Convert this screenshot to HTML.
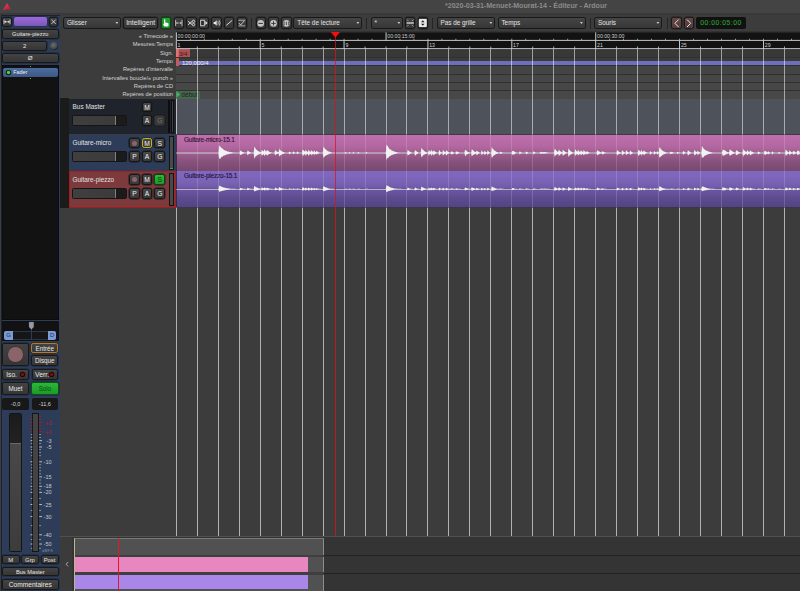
<!DOCTYPE html>
<html lang="fr"><head><meta charset="utf-8"><title>Ardour</title>
<style>
*{box-sizing:border-box;margin:0;padding:0}
html,body{width:800px;height:591px;overflow:hidden;background:#3c3c3c}
body{position:relative;font-family:"Liberation Sans","DejaVu Sans",sans-serif;color:#ddd;font-size:6.3px;line-height:1}
.a{position:absolute}
.btn{position:absolute;border-radius:2.2px;background:linear-gradient(#434343,#353535);border:0.9px solid #181818;box-shadow:0 0 0 0.5px rgba(18,18,24,0.55);color:#e8e8e8;text-align:center;white-space:nowrap;overflow:hidden}
.dd{position:absolute;border-radius:2.2px;background:linear-gradient(#454545,#363636);border:0.9px solid #181818;color:#e4e4e4;white-space:nowrap;overflow:hidden;font-size:6.4px;padding-left:2.9px}
.dd:after{content:"";position:absolute;right:1.6px;top:50%;margin-top:-0.9px;width:3px;height:2px;background:#c8c8c8;clip-path:polygon(0 0,100% 0,50% 100%)}
.sep{position:absolute;width:1.2px;background:#252525;top:17.5px;height:11px}
.rl{position:absolute;right:627px;white-space:nowrap;font-size:5.7px;color:#d4d4d4;text-align:right}
.tb{position:absolute;border-radius:2.2px;background:linear-gradient(#484848,#383838);border:0.9px solid #151515;box-shadow:0 0 0 0.45px #1c1c1c;color:#f0f0f0;text-align:center;font-size:6.7px;white-space:nowrap}
.fd{position:absolute;border-radius:1.5px;background:linear-gradient(90deg,#3f3f3f 0,#3b3b3b 80%,#808080 80%,#808080 81.5%,#1b1b1b 81.5%);border:0.7px solid #151515}
.tn{position:absolute;font-size:6.4px;color:#e2e2e2;white-space:nowrap}
svg{position:absolute;left:0;top:0}
</style></head><body>

<div class="a" style="left:0;top:0;width:800px;height:15px;background:linear-gradient(#444 0,#444 84%,#393939 90%,#393939 96%,#3d3d3d 100%)"></div>
<div class="a" style="left:445px;top:2.9px;width:170px;font-size:7.1px;font-weight:bold;color:#8b8b8b;white-space:nowrap;letter-spacing:-0.02px">*2020-03-31-Menuet-Mourat-14 - Éditeur - Ardour</div>
<svg width="16" height="14" viewBox="0 0 16 14"><defs><linearGradient id="lg" x1="0" y1="0" x2="1" y2="1"><stop offset="0" stop-color="#f04a5a"/><stop offset="1" stop-color="#b01230"/></linearGradient></defs><path d="M7 3 L11.3 10.3 L7 9.2 L2.8 10.3 Z" fill="url(#lg)"/></svg>
<div class="dd" style="left:63px;top:17.3px;width:58px;height:11.4px;line-height:9.7px;">Glisser</div>
<div class="btn" style="left:123px;top:17.3px;width:35.2px;height:11.4px;font-size:6.7px;line-height:9.8px;letter-spacing:0.02px">Intelligent</div>
<div class="btn" style="left:161px;top:17.3px;width:10.4px;height:11.4px;background:linear-gradient(#20a830,#178c24);border-color:#0b4a12"></div>
<div class="btn" style="left:173.6px;top:17.3px;width:10.4px;height:11.4px;"></div>
<div class="btn" style="left:186.2px;top:17.3px;width:10.4px;height:11.4px;"></div>
<div class="btn" style="left:198.8px;top:17.3px;width:10.4px;height:11.4px;"></div>
<div class="btn" style="left:211.4px;top:17.3px;width:10.4px;height:11.4px;"></div>
<div class="btn" style="left:224px;top:17.3px;width:10.4px;height:11.4px;"></div>
<div class="btn" style="left:236.6px;top:17.3px;width:10.4px;height:11.4px;"></div>
<div class="sep" style="left:251px"></div>
<div class="btn" style="left:255.5px;top:17.3px;width:10.4px;height:11.4px;"></div>
<div class="btn" style="left:268.3px;top:17.3px;width:10.4px;height:11.4px;"></div>
<div class="btn" style="left:281.2px;top:17.3px;width:10.4px;height:11.4px;"></div>
<div class="dd" style="left:293.4px;top:17.3px;width:68.6px;height:11.4px;line-height:9.7px;">Tête de lecture</div>
<div class="sep" style="left:365.5px"></div>
<div class="dd" style="left:370.5px;top:17.3px;width:32.5px;height:11.4px;line-height:9.7px;">*</div>
<div class="btn" style="left:405px;top:17.3px;width:10.4px;height:11.4px;"></div>
<div class="btn" style="left:417.6px;top:17.3px;width:10.4px;height:11.4px;"></div>
<div class="sep" style="left:431.5px"></div>
<div class="dd" style="left:436.5px;top:17.3px;width:58.5px;height:11.4px;line-height:9.7px;">Pas de grille</div>
<div class="dd" style="left:497.5px;top:17.3px;width:88px;height:11.4px;line-height:9.7px;">Temps</div>
<div class="sep" style="left:589.5px"></div>
<div class="dd" style="left:594px;top:17.3px;width:68px;height:11.4px;line-height:9.7px;">Souris</div>
<div class="sep" style="left:666.7px"></div>
<div class="btn" style="left:671px;top:17.3px;width:10.8px;height:11.4px;background:linear-gradient(#624848,#523c3c);border-color:#221818"></div>
<div class="btn" style="left:683.6px;top:17.3px;width:10.8px;height:11.4px;background:linear-gradient(#624848,#523c3c);border-color:#221818"></div>
<div class="a" style="left:696px;top:17.3px;width:50px;height:11.6px;background:#111;border-radius:2px;color:#2fa233;font-size:6.7px;line-height:11.6px;text-align:center;letter-spacing:0.55px;-webkit-text-stroke:0.1px">00:00:05:00</div>
<svg width="800" height="32" viewBox="0 0 800 32"><path d="M164 19.4 q0.65 -0.5 1.3 0 v3.2 l2.6 0.5 q0.7 0.2 0.7 0.9 v1.6 q0 1 -1 1 h-2.8 q-0.8 0 -1.1 -0.8 l-0.5 -1.6 q0 -0.6 0.8 -0.4 z" fill="#f4f4f4"/><path d="M175.60000000000002 19.9 v6.2 M182.0 19.9 v6.2" stroke="#e8e8e8" stroke-width="0.7" fill="none"/><path d="M175.60000000000002 23 h6.4" stroke="#d0d0d0" stroke-width="0.5" fill="none"/><path d="M176.10000000000002 23 l1.3 -1.1 v2.2 z M181.5 23 l-1.3 -1.1 v2.2 z" fill="#e8e8e8"/><path d="M188.0 21.2 l4.2 3.4 M188.0 24.8 l4.2 -3.4" stroke="#e8e8e8" stroke-width="0.9" fill="none"/><circle cx="193.5" cy="21.4" r="1.2" stroke="#e8e8e8" stroke-width="0.8" fill="none"/><circle cx="193.5" cy="24.6" r="1.2" stroke="#e8e8e8" stroke-width="0.8" fill="none"/><rect x="200.7" y="20.2" width="3.6" height="5.6" fill="#2a2a2a" stroke="#e8e8e8" stroke-width="0.8"/><path d="M205.3 21 l2.3 2 l-2.3 2 z" fill="#e8e8e8"/><path d="M213.6 22 h1.3 l1.8 -1.7 v5.4 l-1.8 -1.7 h-1.3 z" fill="#e8e8e8"/><path d="M217.7 21.2 q1.2 1.8 0 3.6 M219.1 20.2 q2 2.8 0 5.6" stroke="#e8e8e8" stroke-width="0.7" fill="none"/><path d="M226.2 25.4 L232.2 20.4" stroke="#e8e8e8" stroke-width="0.9"/><path d="M238.4 20.3 h6.8 M238.4 25.8 h6.8" stroke="#e8e8e8" stroke-width="0.6"/><path d="M238.8 23 l1.8 2 l3.6 -4" stroke="#e8e8e8" stroke-width="0.8" fill="none"/><circle cx="260.7" cy="23.4" r="3.3" fill="#c4c4c4"/><path d="M258.5 23.4 h4.4" stroke="#333" stroke-width="1"/><circle cx="273.5" cy="23.4" r="3.3" fill="#c4c4c4"/><path d="M271.3 23.4 h4.4 M273.5 21.2 v4.4" stroke="#333" stroke-width="0.9"/><circle cx="286.4" cy="23.4" r="3.3" fill="#c4c4c4"/><path d="M284.59999999999997 21.9 h-0.6 v3 h0.6 M288.2 21.9 h0.6 v3 h-0.6 M286.4 21.799999999999997 v3.2" stroke="#333" stroke-width="0.8" fill="none"/><path d="M406.59999999999997 23 h7.2" stroke="#e0e0e0" stroke-width="1.3"/><path d="M407.0 19.6 l1.5 1.5 M413.4 19.6 l-1.5 1.5 M407.0 26.4 l1.5 -1.5 M413.4 26.4 l-1.5 -1.5" stroke="#e0e0e0" stroke-width="0.6"/><rect x="418.8" y="19" width="8" height="8" rx="0.8" fill="#e8e8e8"/><path d="M421.1 22.3 l1.7 -2 l1.7 2 z M421.1 23.8 l1.7 2 l1.7 -2 z" fill="#1c1c1c"/><path d="M678.6 19.6 l-3.7 3.7 l3.7 3.7" stroke="#e2e2e2" stroke-width="1" fill="none"/><path d="M687 19.6 l3.7 3.7 l-3.7 3.7" stroke="#e2e2e2" stroke-width="1" fill="none"/></svg>
<div class="a" style="left:176.3px;top:31.3px;width:623.7px;height:1.4px;background:linear-gradient(#3a3a3a,#1c1c1c)"></div>
<div class="rl" style="top:34.3px">« Timecode »</div>
<div class="rl" style="top:42.4px">Mesures:Temps</div>
<div class="rl" style="top:50.8px">Sign.</div>
<div class="rl" style="top:59.1px">Tempo</div>
<div class="rl" style="top:67.4px">Repères d'intervalle</div>
<div class="rl" style="top:75.7px">Intervalles boucle/« punch »</div>
<div class="rl" style="top:84.1px">Repères de CD</div>
<div class="rl" style="top:92.4px">Repères de position</div>
<div class="a" style="left:176.3px;top:32.6px;width:623.7px;height:16.1px;background:#121212"></div>
<div class="a" style="left:176.3px;top:48.7px;width:623.7px;height:8.4px;background:#383838;border-top:0.7px solid #303030"></div>
<div class="a" style="left:176.3px;top:57.0px;width:623.7px;height:8.4px;background:#3b3b3b;border-top:0.7px solid #303030"></div>
<div class="a" style="left:176.3px;top:65.3px;width:623.7px;height:8.4px;background:#444444;border-top:0.7px solid #303030"></div>
<div class="a" style="left:176.3px;top:73.6px;width:623.7px;height:8.5px;background:#464646;border-top:0.7px solid #303030"></div>
<div class="a" style="left:176.3px;top:82.0px;width:623.7px;height:8.4px;background:#474747;border-top:0.7px solid #303030"></div>
<div class="a" style="left:176.3px;top:90.3px;width:623.7px;height:8.4px;background:#484848;border-top:0.7px solid #303030"></div>
<div class="a" style="left:176.3px;top:60.7px;width:623.7px;height:4.1px;background:#6d6fbc"></div>
<div class="a" style="left:176.3px;top:49.4px;width:14px;height:7.6px;background:linear-gradient(90deg,#e67272 0,#e67272 17%,#ab5151 19%);color:#4e1616;font-size:6.2px;line-height:10.2px;padding-left:2.6px;overflow:hidden">3/4</div>
<div class="a" style="left:176.3px;top:57.6px;width:3.2px;height:8px;background:#c85a5a"></div>
<div class="a" style="left:181.9px;top:59.8px;font-size:6px;color:#eeeef8;white-space:nowrap">120,000/4</div>
<div class="a" style="left:176.3px;top:91px;width:23.5px;height:7.6px;background:#48664f"></div>
<div class="a" style="left:181.3px;top:92.2px;font-size:6.6px;color:#16261a;white-space:nowrap">début</div>
<svg width="800" height="100" viewBox="0 0 800 100"><path d="M176.3 91 L180 94.4 L176.3 97.8 z" fill="#45b06c"/></svg>
<div class="a" style="left:176.3px;top:98.6px;width:623.7px;height:35.900000000000006px;background:#4d525b"></div>
<div class="a" style="left:176.3px;top:134.5px;width:623.7px;height:36.5px;background:linear-gradient(#be6eac 0,#b468a2 30%,#86527c 75%,#774870 100%)"></div>
<div class="a" style="left:176.3px;top:171.0px;width:623.7px;height:36.0px;background:linear-gradient(#8068c0 0,#7a63b6 30%,#5d4b90 75%,#54447f 100%)"></div>
<div class="a" style="left:176.3px;top:206.9px;width:623.7px;height:1px;background:#3a3550"></div>
<div class="a" style="left:184px;top:136.9px;font-size:6.5px;letter-spacing:-0.2px;color:#2c1029;-webkit-text-stroke:0.1px;white-space:nowrap">Guitare-micro-15.1</div>
<div class="a" style="left:184px;top:173.3px;font-size:6.5px;letter-spacing:-0.2px;color:#1a1238;-webkit-text-stroke:0.1px;white-space:nowrap">Guitare-piezzo-15.1</div>
<svg width="800" height="591" viewBox="0 0 800 591"><rect x="176" y="98.6" width="1" height="35.9" fill="#fff" fill-opacity="0.62"/><rect x="176" y="134.5" width="1" height="72.6" fill="#fff" fill-opacity="0.15"/><rect x="176" y="207.6" width="1" height="328.8" fill="#fff" fill-opacity="0.6"/><rect x="197" y="48.8" width="1" height="85.7" fill="#fff" fill-opacity="0.52"/><rect x="197" y="134.5" width="1" height="72.6" fill="#fff" fill-opacity="0.15"/><rect x="197" y="207.6" width="1" height="328.8" fill="#fff" fill-opacity="0.6"/><rect x="218" y="48.8" width="1" height="85.7" fill="#fff" fill-opacity="0.52"/><rect x="218" y="134.5" width="1" height="72.6" fill="#fff" fill-opacity="0.15"/><rect x="218" y="207.6" width="1" height="328.8" fill="#fff" fill-opacity="0.6"/><rect x="239" y="48.8" width="1" height="85.7" fill="#fff" fill-opacity="0.52"/><rect x="239" y="134.5" width="1" height="72.6" fill="#fff" fill-opacity="0.15"/><rect x="239" y="207.6" width="1" height="328.8" fill="#fff" fill-opacity="0.6"/><rect x="260" y="48.8" width="1" height="85.7" fill="#fff" fill-opacity="0.52"/><rect x="260" y="134.5" width="1" height="72.6" fill="#fff" fill-opacity="0.15"/><rect x="260" y="207.6" width="1" height="328.8" fill="#fff" fill-opacity="0.6"/><rect x="281" y="48.8" width="1" height="85.7" fill="#fff" fill-opacity="0.52"/><rect x="281" y="134.5" width="1" height="72.6" fill="#fff" fill-opacity="0.15"/><rect x="281" y="207.6" width="1" height="328.8" fill="#fff" fill-opacity="0.6"/><rect x="302" y="48.8" width="1" height="85.7" fill="#fff" fill-opacity="0.52"/><rect x="302" y="134.5" width="1" height="72.6" fill="#fff" fill-opacity="0.15"/><rect x="302" y="207.6" width="1" height="328.8" fill="#fff" fill-opacity="0.6"/><rect x="323" y="48.8" width="1" height="85.7" fill="#fff" fill-opacity="0.52"/><rect x="323" y="134.5" width="1" height="72.6" fill="#fff" fill-opacity="0.15"/><rect x="323" y="207.6" width="1" height="328.8" fill="#fff" fill-opacity="0.6"/><rect x="344" y="48.8" width="1" height="85.7" fill="#fff" fill-opacity="0.52"/><rect x="344" y="134.5" width="1" height="72.6" fill="#fff" fill-opacity="0.15"/><rect x="344" y="207.6" width="1" height="328.8" fill="#fff" fill-opacity="0.6"/><rect x="365" y="48.8" width="1" height="85.7" fill="#fff" fill-opacity="0.52"/><rect x="365" y="134.5" width="1" height="72.6" fill="#fff" fill-opacity="0.15"/><rect x="365" y="207.6" width="1" height="328.8" fill="#fff" fill-opacity="0.6"/><rect x="386" y="48.8" width="1" height="85.7" fill="#fff" fill-opacity="0.52"/><rect x="386" y="134.5" width="1" height="72.6" fill="#fff" fill-opacity="0.15"/><rect x="386" y="207.6" width="1" height="328.8" fill="#fff" fill-opacity="0.6"/><rect x="406" y="48.8" width="1" height="85.7" fill="#fff" fill-opacity="0.52"/><rect x="406" y="134.5" width="1" height="72.6" fill="#fff" fill-opacity="0.15"/><rect x="406" y="207.6" width="1" height="328.8" fill="#fff" fill-opacity="0.6"/><rect x="427" y="48.8" width="1" height="85.7" fill="#fff" fill-opacity="0.52"/><rect x="427" y="134.5" width="1" height="72.6" fill="#fff" fill-opacity="0.15"/><rect x="427" y="207.6" width="1" height="328.8" fill="#fff" fill-opacity="0.6"/><rect x="448" y="48.8" width="1" height="85.7" fill="#fff" fill-opacity="0.52"/><rect x="448" y="134.5" width="1" height="72.6" fill="#fff" fill-opacity="0.15"/><rect x="448" y="207.6" width="1" height="328.8" fill="#fff" fill-opacity="0.6"/><rect x="469" y="48.8" width="1" height="85.7" fill="#fff" fill-opacity="0.52"/><rect x="469" y="134.5" width="1" height="72.6" fill="#fff" fill-opacity="0.15"/><rect x="469" y="207.6" width="1" height="328.8" fill="#fff" fill-opacity="0.6"/><rect x="490" y="48.8" width="1" height="85.7" fill="#fff" fill-opacity="0.52"/><rect x="490" y="134.5" width="1" height="72.6" fill="#fff" fill-opacity="0.15"/><rect x="490" y="207.6" width="1" height="328.8" fill="#fff" fill-opacity="0.6"/><rect x="511" y="48.8" width="1" height="85.7" fill="#fff" fill-opacity="0.52"/><rect x="511" y="134.5" width="1" height="72.6" fill="#fff" fill-opacity="0.15"/><rect x="511" y="207.6" width="1" height="328.8" fill="#fff" fill-opacity="0.6"/><rect x="532" y="48.8" width="1" height="85.7" fill="#fff" fill-opacity="0.52"/><rect x="532" y="134.5" width="1" height="72.6" fill="#fff" fill-opacity="0.15"/><rect x="532" y="207.6" width="1" height="328.8" fill="#fff" fill-opacity="0.6"/><rect x="553" y="48.8" width="1" height="85.7" fill="#fff" fill-opacity="0.52"/><rect x="553" y="134.5" width="1" height="72.6" fill="#fff" fill-opacity="0.15"/><rect x="553" y="207.6" width="1" height="328.8" fill="#fff" fill-opacity="0.6"/><rect x="574" y="48.8" width="1" height="85.7" fill="#fff" fill-opacity="0.52"/><rect x="574" y="134.5" width="1" height="72.6" fill="#fff" fill-opacity="0.15"/><rect x="574" y="207.6" width="1" height="328.8" fill="#fff" fill-opacity="0.6"/><rect x="595" y="48.8" width="1" height="85.7" fill="#fff" fill-opacity="0.52"/><rect x="595" y="134.5" width="1" height="72.6" fill="#fff" fill-opacity="0.15"/><rect x="595" y="207.6" width="1" height="328.8" fill="#fff" fill-opacity="0.6"/><rect x="616" y="48.8" width="1" height="85.7" fill="#fff" fill-opacity="0.52"/><rect x="616" y="134.5" width="1" height="72.6" fill="#fff" fill-opacity="0.15"/><rect x="616" y="207.6" width="1" height="328.8" fill="#fff" fill-opacity="0.6"/><rect x="637" y="48.8" width="1" height="85.7" fill="#fff" fill-opacity="0.52"/><rect x="637" y="134.5" width="1" height="72.6" fill="#fff" fill-opacity="0.15"/><rect x="637" y="207.6" width="1" height="328.8" fill="#fff" fill-opacity="0.6"/><rect x="658" y="48.8" width="1" height="85.7" fill="#fff" fill-opacity="0.52"/><rect x="658" y="134.5" width="1" height="72.6" fill="#fff" fill-opacity="0.15"/><rect x="658" y="207.6" width="1" height="328.8" fill="#fff" fill-opacity="0.6"/><rect x="679" y="48.8" width="1" height="85.7" fill="#fff" fill-opacity="0.52"/><rect x="679" y="134.5" width="1" height="72.6" fill="#fff" fill-opacity="0.15"/><rect x="679" y="207.6" width="1" height="328.8" fill="#fff" fill-opacity="0.6"/><rect x="700" y="48.8" width="1" height="85.7" fill="#fff" fill-opacity="0.52"/><rect x="700" y="134.5" width="1" height="72.6" fill="#fff" fill-opacity="0.15"/><rect x="700" y="207.6" width="1" height="328.8" fill="#fff" fill-opacity="0.6"/><rect x="721" y="48.8" width="1" height="85.7" fill="#fff" fill-opacity="0.52"/><rect x="721" y="134.5" width="1" height="72.6" fill="#fff" fill-opacity="0.15"/><rect x="721" y="207.6" width="1" height="328.8" fill="#fff" fill-opacity="0.6"/><rect x="742" y="48.8" width="1" height="85.7" fill="#fff" fill-opacity="0.52"/><rect x="742" y="134.5" width="1" height="72.6" fill="#fff" fill-opacity="0.15"/><rect x="742" y="207.6" width="1" height="328.8" fill="#fff" fill-opacity="0.6"/><rect x="763" y="48.8" width="1" height="85.7" fill="#fff" fill-opacity="0.52"/><rect x="763" y="134.5" width="1" height="72.6" fill="#fff" fill-opacity="0.15"/><rect x="763" y="207.6" width="1" height="328.8" fill="#fff" fill-opacity="0.6"/><rect x="784" y="48.8" width="1" height="85.7" fill="#fff" fill-opacity="0.52"/><rect x="784" y="134.5" width="1" height="72.6" fill="#fff" fill-opacity="0.15"/><rect x="784" y="207.6" width="1" height="328.8" fill="#fff" fill-opacity="0.6"/><rect x="176.3" y="39.9" width="623.7" height="0.9" fill="#d8d8d8"/><rect x="176.3" y="48.2" width="623.7" height="0.9" fill="#d8d8d8"/><rect x="175.90" y="32.4" width="0.9" height="8" fill="#ddd"/><rect x="189.93" y="38.7" width="0.7" height="1.6" fill="#ccc"/><rect x="203.91" y="38.7" width="0.7" height="1.6" fill="#ccc"/><rect x="217.89" y="38.7" width="0.7" height="1.6" fill="#ccc"/><rect x="231.87" y="38.7" width="0.7" height="1.6" fill="#ccc"/><rect x="245.85" y="38.7" width="0.7" height="1.6" fill="#ccc"/><rect x="259.83" y="38.7" width="0.7" height="1.6" fill="#ccc"/><rect x="273.81" y="38.7" width="0.7" height="1.6" fill="#ccc"/><rect x="287.79" y="38.7" width="0.7" height="1.6" fill="#ccc"/><rect x="301.77" y="38.7" width="0.7" height="1.6" fill="#ccc"/><rect x="315.75" y="38.7" width="0.7" height="1.6" fill="#ccc"/><rect x="329.73" y="38.7" width="0.7" height="1.6" fill="#ccc"/><rect x="343.71" y="38.7" width="0.7" height="1.6" fill="#ccc"/><rect x="357.69" y="38.7" width="0.7" height="1.6" fill="#ccc"/><rect x="371.67" y="38.7" width="0.7" height="1.6" fill="#ccc"/><rect x="385.60" y="32.4" width="0.9" height="8" fill="#ddd"/><rect x="399.63" y="38.7" width="0.7" height="1.6" fill="#ccc"/><rect x="413.61" y="38.7" width="0.7" height="1.6" fill="#ccc"/><rect x="427.59" y="38.7" width="0.7" height="1.6" fill="#ccc"/><rect x="441.57" y="38.7" width="0.7" height="1.6" fill="#ccc"/><rect x="455.55" y="38.7" width="0.7" height="1.6" fill="#ccc"/><rect x="469.53" y="38.7" width="0.7" height="1.6" fill="#ccc"/><rect x="483.51" y="38.7" width="0.7" height="1.6" fill="#ccc"/><rect x="497.49" y="38.7" width="0.7" height="1.6" fill="#ccc"/><rect x="511.47" y="38.7" width="0.7" height="1.6" fill="#ccc"/><rect x="525.45" y="38.7" width="0.7" height="1.6" fill="#ccc"/><rect x="539.43" y="38.7" width="0.7" height="1.6" fill="#ccc"/><rect x="553.41" y="38.7" width="0.7" height="1.6" fill="#ccc"/><rect x="567.39" y="38.7" width="0.7" height="1.6" fill="#ccc"/><rect x="581.37" y="38.7" width="0.7" height="1.6" fill="#ccc"/><rect x="595.30" y="32.4" width="0.9" height="8" fill="#ddd"/><rect x="609.33" y="38.7" width="0.7" height="1.6" fill="#ccc"/><rect x="623.31" y="38.7" width="0.7" height="1.6" fill="#ccc"/><rect x="637.29" y="38.7" width="0.7" height="1.6" fill="#ccc"/><rect x="651.27" y="38.7" width="0.7" height="1.6" fill="#ccc"/><rect x="665.25" y="38.7" width="0.7" height="1.6" fill="#ccc"/><rect x="679.23" y="38.7" width="0.7" height="1.6" fill="#ccc"/><rect x="693.21" y="38.7" width="0.7" height="1.6" fill="#ccc"/><rect x="707.19" y="38.7" width="0.7" height="1.6" fill="#ccc"/><rect x="721.17" y="38.7" width="0.7" height="1.6" fill="#ccc"/><rect x="735.15" y="38.7" width="0.7" height="1.6" fill="#ccc"/><rect x="749.13" y="38.7" width="0.7" height="1.6" fill="#ccc"/><rect x="763.11" y="38.7" width="0.7" height="1.6" fill="#ccc"/><rect x="777.09" y="38.7" width="0.7" height="1.6" fill="#ccc"/><rect x="791.07" y="38.7" width="0.7" height="1.6" fill="#ccc"/><rect x="175.85" y="40.8" width="0.9" height="8" fill="#ddd"/><rect x="196.87" y="46.5" width="0.8" height="2" fill="#ccc"/><rect x="217.84" y="46.5" width="0.8" height="2" fill="#ccc"/><rect x="238.81" y="46.5" width="0.8" height="2" fill="#ccc"/><rect x="259.73" y="40.8" width="0.9" height="8" fill="#ddd"/><rect x="280.75" y="46.5" width="0.8" height="2" fill="#ccc"/><rect x="301.72" y="46.5" width="0.8" height="2" fill="#ccc"/><rect x="322.69" y="46.5" width="0.8" height="2" fill="#ccc"/><rect x="343.61" y="40.8" width="0.9" height="8" fill="#ddd"/><rect x="364.63" y="46.5" width="0.8" height="2" fill="#ccc"/><rect x="385.60" y="46.5" width="0.8" height="2" fill="#ccc"/><rect x="406.57" y="46.5" width="0.8" height="2" fill="#ccc"/><rect x="427.49" y="40.8" width="0.9" height="8" fill="#ddd"/><rect x="448.51" y="46.5" width="0.8" height="2" fill="#ccc"/><rect x="469.48" y="46.5" width="0.8" height="2" fill="#ccc"/><rect x="490.45" y="46.5" width="0.8" height="2" fill="#ccc"/><rect x="511.37" y="40.8" width="0.9" height="8" fill="#ddd"/><rect x="532.39" y="46.5" width="0.8" height="2" fill="#ccc"/><rect x="553.36" y="46.5" width="0.8" height="2" fill="#ccc"/><rect x="574.33" y="46.5" width="0.8" height="2" fill="#ccc"/><rect x="595.25" y="40.8" width="0.9" height="8" fill="#ddd"/><rect x="616.27" y="46.5" width="0.8" height="2" fill="#ccc"/><rect x="637.24" y="46.5" width="0.8" height="2" fill="#ccc"/><rect x="658.21" y="46.5" width="0.8" height="2" fill="#ccc"/><rect x="679.13" y="40.8" width="0.9" height="8" fill="#ddd"/><rect x="700.15" y="46.5" width="0.8" height="2" fill="#ccc"/><rect x="721.12" y="46.5" width="0.8" height="2" fill="#ccc"/><rect x="742.09" y="46.5" width="0.8" height="2" fill="#ccc"/><rect x="763.01" y="40.8" width="0.9" height="8" fill="#ddd"/><rect x="784.03" y="46.5" width="0.8" height="2" fill="#ccc"/><text x="177.6" y="38.2" font-size="5.2" fill="#d0d0d0" font-family="Liberation Sans, sans-serif">00:00:00:00</text><text x="387.3" y="38.2" font-size="5.2" fill="#d0d0d0" font-family="Liberation Sans, sans-serif">00:00:15:00</text><text x="597.0" y="38.2" font-size="5.2" fill="#d0d0d0" font-family="Liberation Sans, sans-serif">00:00:30:00</text><text x="177.6" y="46.9" font-size="5.2" fill="#d0d0d0" font-family="Liberation Sans, sans-serif">1</text><text x="261.5" y="46.9" font-size="5.2" fill="#d0d0d0" font-family="Liberation Sans, sans-serif">5</text><text x="345.4" y="46.9" font-size="5.2" fill="#d0d0d0" font-family="Liberation Sans, sans-serif">9</text><text x="429.2" y="46.9" font-size="5.2" fill="#d0d0d0" font-family="Liberation Sans, sans-serif">13</text><text x="513.1" y="46.9" font-size="5.2" fill="#d0d0d0" font-family="Liberation Sans, sans-serif">17</text><text x="597.0" y="46.9" font-size="5.2" fill="#d0d0d0" font-family="Liberation Sans, sans-serif">21</text><text x="680.9" y="46.9" font-size="5.2" fill="#d0d0d0" font-family="Liberation Sans, sans-serif">25</text><text x="764.8" y="46.9" font-size="5.2" fill="#d0d0d0" font-family="Liberation Sans, sans-serif">29</text><rect x="176.1" y="134.5" width="0.9" height="72.6" fill="#241a30" fill-opacity="0.85"/><polygon points="176.3,152.58 176.7,152.58 177.1,152.58 177.5,152.58 177.9,152.58 178.3,152.58 178.7,152.58 179.1,152.58 179.5,152.58 179.9,152.58 180.3,152.58 180.7,152.58 181.1,152.58 181.5,152.58 181.9,152.58 182.3,152.58 182.7,152.58 183.1,152.58 183.5,152.58 183.9,152.58 184.3,152.58 184.7,152.58 185.1,152.58 185.5,152.58 185.9,152.58 186.3,152.58 186.7,152.58 187.1,152.58 187.5,152.58 187.9,152.58 188.3,152.58 188.7,152.58 189.1,152.58 189.5,152.58 189.9,152.58 190.3,152.58 190.7,152.58 191.1,152.58 191.5,152.58 191.9,152.58 192.3,152.58 192.7,152.58 193.1,152.58 193.5,152.58 193.9,152.58 194.3,152.58 194.7,152.58 195.1,152.58 195.5,152.58 195.9,152.58 196.3,152.58 196.7,152.58 197.1,152.58 197.5,152.58 197.9,152.58 198.3,152.58 198.7,152.58 199.1,152.58 199.5,152.58 199.9,152.58 200.3,152.58 200.7,152.58 201.1,152.58 201.5,152.58 201.9,152.58 202.3,152.58 202.7,152.58 203.1,152.58 203.5,152.58 203.9,152.58 204.3,152.58 204.7,152.58 205.1,152.58 205.5,152.58 205.9,152.58 206.3,152.58 206.7,152.58 207.1,152.58 207.5,152.58 207.9,152.58 208.3,152.58 208.7,152.58 209.1,152.58 209.5,152.58 209.9,152.58 210.3,152.58 210.7,152.58 211.1,152.58 211.5,152.58 211.9,152.58 212.3,152.58 212.7,152.58 213.1,152.58 213.5,152.58 213.9,152.58 214.3,152.58 214.7,152.58 215.1,152.58 215.5,152.58 215.9,152.58 216.3,152.58 216.7,152.58 217.1,152.58 217.5,152.58 217.9,152.58 218.3,152.58 218.7,149.68 219.1,144.23 219.5,146.23 219.9,145.05 220.3,146.87 220.7,146.02 221.1,147.42 221.5,148.10 221.9,147.41 222.3,148.31 222.7,148.74 223.1,148.66 223.5,149.49 223.9,149.75 224.3,149.96 224.7,150.27 225.1,150.31 225.5,150.36 225.9,150.64 226.3,150.76 226.7,150.91 227.1,151.10 227.5,151.42 227.9,151.47 228.3,151.36 228.7,151.62 229.1,151.64 229.5,151.88 229.9,151.91 230.3,151.85 230.7,151.99 231.1,151.98 231.5,152.11 231.9,152.20 232.3,152.26 232.7,152.31 233.1,152.32 233.5,152.34 233.9,152.44 234.3,152.42 234.7,152.46 235.1,152.50 235.5,152.53 235.9,152.57 236.3,152.58 236.7,152.58 237.1,152.58 237.5,152.58 237.9,152.58 238.3,152.58 238.7,152.58 239.1,152.58 239.5,152.58 239.9,150.39 240.3,150.15 240.7,150.87 241.1,150.83 241.5,151.37 241.9,151.30 242.3,151.75 242.7,151.93 243.1,152.01 243.5,152.11 243.9,152.15 244.3,152.37 244.7,152.39 245.1,152.42 245.5,152.49 245.9,152.56 246.3,152.58 246.7,152.58 247.1,151.94 247.5,150.14 247.9,150.51 248.3,151.01 248.7,151.18 249.1,151.60 249.5,151.82 249.9,151.91 250.3,151.96 250.7,152.16 251.1,152.31 251.5,152.42 251.9,152.41 252.3,152.49 252.7,152.56 253.1,152.58 253.5,152.58 253.9,150.19 254.3,145.68 254.7,147.02 255.1,147.19 255.5,148.20 255.9,149.12 256.3,149.53 256.7,149.76 257.1,150.25 257.5,150.03 257.9,150.72 258.3,150.96 258.7,151.26 259.1,151.41 259.5,151.32 259.9,151.75 260.3,151.87 260.7,152.08 261.1,152.07 261.5,150.68 261.9,149.56 262.3,150.10 262.7,150.58 263.1,150.82 263.5,151.02 263.9,151.27 264.3,148.83 264.7,149.61 265.1,149.98 265.5,150.65 265.9,151.37 266.3,151.34 266.7,150.02 267.1,150.08 267.5,150.24 267.9,150.42 268.3,150.87 268.7,151.10 269.1,151.53 269.5,151.75 269.9,151.92 270.3,151.95 270.7,152.07 271.1,152.22 271.5,152.27 271.9,152.41 272.3,152.42 272.7,152.50 273.1,152.56 273.5,152.58 273.9,152.58 274.3,152.58 274.7,151.60 275.1,149.36 275.5,150.05 275.9,150.81 276.3,150.86 276.7,151.27 277.1,151.72 277.5,151.74 277.9,151.94 278.3,152.14 278.7,151.17 279.1,148.09 279.5,148.62 279.9,149.96 280.3,149.72 280.7,150.36 281.1,150.82 281.5,151.08 281.9,151.34 282.3,151.22 282.7,151.48 283.1,151.64 283.5,151.98 283.9,152.04 284.3,152.26 284.7,152.27 285.1,152.41 285.5,152.45 285.9,152.43 286.3,152.50 286.7,152.56 287.1,152.58 287.5,152.58 287.9,152.58 288.3,152.58 288.7,152.28 289.1,151.38 289.5,151.61 289.9,151.88 290.3,152.02 290.7,152.23 291.1,152.29 291.5,152.41 291.9,152.52 292.3,152.58 292.7,152.20 293.1,151.09 293.5,151.61 293.9,151.68 294.3,152.03 294.7,152.25 295.1,152.28 295.5,152.41 295.9,152.52 296.3,152.58 296.7,152.34 297.1,151.30 297.5,151.48 297.9,151.89 298.3,152.15 298.7,152.28 299.1,152.43 299.5,152.44 299.9,152.55 300.3,152.58 300.7,152.58 301.1,152.58 301.5,152.58 301.9,152.58 302.3,149.36 302.7,149.42 303.1,149.89 303.5,149.96 303.9,150.44 304.3,151.22 304.7,151.11 305.1,151.49 305.5,149.57 305.9,149.65 306.3,150.32 306.7,151.21 307.1,151.36 307.5,151.51 307.9,151.85 308.3,149.30 308.7,150.08 309.1,150.62 309.5,150.82 309.9,151.43 310.3,151.52 310.7,151.80 311.1,149.77 311.5,150.27 311.9,150.80 312.3,151.32 312.7,151.37 313.1,151.68 313.5,151.89 313.9,149.78 314.3,150.59 314.7,151.07 315.1,151.44 315.5,151.63 315.9,151.99 316.3,150.73 316.7,150.83 317.1,151.15 317.5,151.52 317.9,151.58 318.3,151.83 318.7,152.13 319.1,152.24 319.5,152.32 319.9,152.45 320.3,152.43 320.7,152.51 321.1,152.58 321.5,152.58 321.9,152.58 322.3,152.58 322.7,152.58 323.1,148.21 323.5,146.74 323.9,146.51 324.3,147.29 324.7,148.24 325.1,148.96 325.5,149.27 325.9,149.07 326.3,149.47 326.7,150.26 327.1,150.26 327.5,150.98 327.9,151.02 328.3,151.31 328.7,151.20 329.1,151.57 329.5,151.60 329.9,151.96 330.3,151.84 330.7,152.00 331.1,152.19 331.5,152.16 331.9,152.36 332.3,152.42 332.7,152.52 333.1,152.45 333.5,152.51 333.9,152.56 334.3,152.58 334.7,152.58 335.1,152.58 335.5,152.58 335.9,152.58 336.3,152.58 336.7,152.58 337.1,152.58 337.5,152.58 337.9,152.58 338.3,152.58 338.7,152.58 339.1,152.58 339.5,152.58 339.9,152.58 340.3,152.58 340.7,152.58 341.1,152.58 341.5,152.58 341.9,152.58 342.3,152.58 342.7,152.58 343.1,152.58 343.5,152.58 343.9,152.58 344.3,152.58 344.7,152.44 345.1,151.82 345.5,151.94 345.9,152.16 346.3,152.28 346.7,152.42 347.1,152.52 347.5,152.58 347.9,152.58 348.3,152.58 348.7,152.49 349.1,151.80 349.5,152.09 349.9,152.21 350.3,152.40 350.7,152.47 351.1,152.57 351.5,152.58 351.9,152.58 352.3,152.58 352.7,152.44 353.1,151.85 353.5,151.87 353.9,152.30 354.3,152.38 354.7,152.42 355.1,152.52 355.5,152.58 355.9,152.58 356.3,152.58 356.7,152.58 357.1,152.58 357.5,152.58 357.9,151.95 358.3,152.01 358.7,152.15 359.1,152.31 359.5,152.43 359.9,152.47 360.3,152.57 360.7,152.58 361.1,152.58 361.5,152.58 361.9,152.58 362.3,152.58 362.7,152.58 363.1,152.58 363.5,152.58 363.9,152.58 364.3,152.58 364.7,152.58 365.1,152.58 365.5,152.58 365.9,152.03 366.3,151.78 366.7,152.19 367.1,152.29 367.5,152.48 367.9,152.47 368.3,152.57 368.7,152.58 369.1,152.58 369.5,152.58 369.9,152.58 370.3,152.58 370.7,152.58 371.1,152.58 371.5,152.58 371.9,152.58 372.3,152.58 372.7,152.58 373.1,152.58 373.5,152.58 373.9,152.58 374.3,152.58 374.7,152.58 375.1,152.58 375.5,152.58 375.9,152.58 376.3,152.58 376.7,152.58 377.1,152.58 377.5,152.58 377.9,152.58 378.3,152.58 378.7,152.58 379.1,152.58 379.5,152.58 379.9,152.58 380.3,152.58 380.7,152.58 381.1,152.58 381.5,152.58 381.9,152.58 382.3,152.58 382.7,152.58 383.1,152.58 383.5,152.58 383.9,152.58 384.3,152.58 384.7,152.58 385.1,152.58 385.5,152.58 385.9,151.03 386.3,142.72 386.7,145.21 387.1,145.38 387.5,145.48 387.9,145.97 388.3,146.81 388.7,147.39 389.1,148.19 389.5,148.90 389.9,148.63 390.3,149.09 390.7,149.74 391.1,149.59 391.5,150.35 391.9,150.50 392.3,150.63 392.7,150.61 393.1,150.79 393.5,151.21 393.9,151.31 394.3,151.51 394.7,151.34 395.1,151.64 395.5,151.87 395.9,151.80 396.3,151.88 396.7,151.90 397.1,152.14 397.5,152.26 397.9,152.25 398.3,152.37 398.7,152.43 399.1,152.34 399.5,152.49 399.9,152.44 400.3,152.48 400.7,152.52 401.1,152.56 401.5,152.58 401.9,152.58 402.3,152.58 402.7,152.58 403.1,152.58 403.5,152.58 403.9,152.58 404.3,152.58 404.7,152.58 405.1,152.58 405.5,152.58 405.9,152.58 406.3,152.58 406.7,152.58 407.1,152.42 407.5,149.72 407.9,149.92 408.3,150.03 408.7,150.74 409.1,150.90 409.5,151.22 409.9,151.57 410.3,151.72 410.7,151.99 411.1,152.12 411.5,152.32 411.9,152.45 412.3,152.42 412.7,152.51 413.1,152.58 413.5,152.58 413.9,152.58 414.3,152.58 414.7,150.79 415.1,150.15 415.5,150.02 415.9,150.77 416.3,150.72 416.7,151.46 417.1,151.73 417.5,151.74 417.9,152.01 418.3,152.18 418.7,152.41 419.1,152.43 419.5,152.50 419.9,152.58 420.3,152.58 420.7,152.58 421.1,148.97 421.5,146.85 421.9,148.68 422.3,148.82 422.7,149.45 423.1,149.76 423.5,149.96 423.9,150.38 424.3,151.15 424.7,151.05 425.1,151.60 425.5,151.62 425.9,151.89 426.3,151.99 426.7,152.14 427.1,152.25 427.5,152.28 427.9,152.46 428.3,151.74 428.7,149.41 429.1,149.91 429.5,150.83 429.9,151.02 430.3,151.38 430.7,151.61 431.1,149.01 431.5,149.91 431.9,150.80 432.3,151.06 432.7,151.34 433.1,151.77 433.5,149.97 433.9,149.97 434.3,150.93 434.7,151.02 435.1,151.61 435.5,151.62 435.9,152.04 436.3,152.10 436.7,152.35 437.1,152.45 437.5,152.46 437.9,152.55 438.3,152.58 438.7,151.73 439.1,149.92 439.5,149.65 439.9,150.73 440.3,151.40 440.7,151.75 441.1,151.92 441.5,152.13 441.9,152.25 442.3,152.41 442.7,150.43 443.1,149.87 443.5,150.36 443.9,151.04 444.3,151.48 444.7,151.69 445.1,151.94 445.5,152.13 445.9,150.08 446.3,149.94 446.7,150.73 447.1,150.78 447.5,151.23 447.9,151.61 448.3,151.80 448.7,152.00 449.1,152.27 449.5,152.30 449.9,152.46 450.3,152.50 450.7,152.31 451.1,150.93 451.5,151.42 451.9,151.34 452.3,151.56 452.7,151.67 453.1,151.97 453.5,152.16 453.9,152.24 454.3,152.40 454.7,152.45 455.1,152.45 455.5,152.53 455.9,151.51 456.3,151.26 456.7,151.42 457.1,151.28 457.5,151.76 457.9,151.89 458.3,152.11 458.7,152.10 459.1,152.29 459.5,152.43 459.9,152.41 460.3,152.49 460.7,152.56 461.1,152.58 461.5,152.58 461.9,152.58 462.3,152.58 462.7,152.58 463.1,152.58 463.5,152.58 463.9,152.58 464.3,152.58 464.7,151.31 465.1,148.64 465.5,149.92 465.9,149.83 466.3,150.75 466.7,150.82 467.1,151.41 467.5,151.39 467.9,151.80 468.3,151.93 468.7,152.06 469.1,152.08 469.5,152.34 469.9,152.37 470.3,152.40 470.7,152.49 471.1,152.56 471.5,149.72 471.9,149.17 472.3,149.31 472.7,149.89 473.1,150.15 473.5,150.57 473.9,150.91 474.3,151.18 474.7,151.65 475.1,151.69 475.5,151.82 475.9,152.06 476.3,150.93 476.7,150.00 477.1,150.95 477.5,151.00 477.9,151.49 478.3,151.70 478.7,151.82 479.1,152.07 479.5,152.30 479.9,152.42 480.3,152.44 480.7,152.54 481.1,152.42 481.5,149.78 481.9,150.16 482.3,151.21 482.7,151.62 483.1,151.89 483.5,152.21 483.9,152.39 484.3,151.15 484.7,150.52 485.1,150.78 485.5,151.60 485.9,151.93 486.3,151.96 486.7,152.24 487.1,152.34 487.5,149.93 487.9,150.25 488.3,151.13 488.7,151.56 489.1,151.86 489.5,152.24 489.9,152.32 490.3,152.44 490.7,152.57 491.1,152.58 491.5,147.84 491.9,147.11 492.3,147.39 492.7,148.76 493.1,149.28 493.5,149.03 493.9,149.42 494.3,150.49 494.7,150.43 495.1,150.53 495.5,151.10 495.9,151.23 496.3,151.63 496.7,151.84 497.1,151.95 497.5,152.08 497.9,152.18 498.3,152.17 498.7,152.26 499.1,152.46 499.5,152.43 499.9,151.86 500.3,151.67 500.7,151.80 501.1,151.96 501.5,152.00 501.9,152.28 502.3,152.25 502.7,152.43 503.1,152.42 503.5,152.51 503.9,152.58 504.3,152.58 504.7,152.58 505.1,152.58 505.5,152.58 505.9,152.58 506.3,152.58 506.7,152.58 507.1,152.58 507.5,152.58 507.9,152.58 508.3,152.58 508.7,152.58 509.1,152.58 509.5,152.58 509.9,152.58 510.3,152.58 510.7,152.58 511.1,152.58 511.5,152.58 511.9,151.42 512.3,150.66 512.7,150.86 513.1,150.78 513.5,150.94 513.9,151.17 514.3,151.34 514.7,151.75 515.1,151.77 515.5,152.06 515.9,152.25 516.3,152.41 516.7,152.42 517.1,152.52 517.5,152.58 517.9,152.58 518.3,152.58 518.7,152.58 519.1,152.58 519.5,151.60 519.9,151.33 520.3,151.71 520.7,152.02 521.1,152.01 521.5,152.35 521.9,152.38 522.3,152.47 522.7,152.57 523.1,152.58 523.5,152.58 523.9,152.58 524.3,152.58 524.7,152.58 525.1,152.58 525.5,152.58 525.9,151.60 526.3,151.45 526.7,151.66 527.1,151.93 527.5,152.03 527.9,152.27 528.3,152.47 528.7,152.47 529.1,152.57 529.5,152.58 529.9,152.58 530.3,152.58 530.7,152.58 531.1,152.58 531.5,152.58 531.9,152.58 532.3,152.58 532.7,152.58 533.1,152.32 533.5,151.05 533.9,151.32 534.3,151.78 534.7,152.12 535.1,152.25 535.5,152.36 535.9,152.41 536.3,152.52 536.7,152.58 537.1,152.58 537.5,152.58 537.9,152.58 538.3,152.58 538.7,152.58 539.1,152.58 539.5,152.58 539.9,152.02 540.3,151.84 540.7,151.96 541.1,151.84 541.5,152.00 541.9,151.98 542.3,152.02 542.7,151.85 543.1,152.04 543.5,152.01 543.9,152.07 544.3,152.10 544.7,151.96 545.1,152.01 545.5,152.08 545.9,152.06 546.3,152.00 546.7,152.27 547.1,152.20 547.5,152.31 547.9,152.34 548.3,152.42 548.7,152.46 549.1,152.51 549.5,152.56 549.9,152.58 550.3,152.58 550.7,152.58 551.1,152.58 551.5,152.58 551.9,152.58 552.3,152.58 552.7,152.58 553.1,152.58 553.5,152.58 553.9,152.58 554.3,149.81 554.7,147.89 555.1,148.66 555.5,149.57 555.9,149.76 556.3,150.24 556.7,151.00 557.1,151.21 557.5,151.46 557.9,151.80 558.3,151.39 558.7,149.42 559.1,149.27 559.5,150.35 559.9,150.73 560.3,151.25 560.7,151.16 561.1,151.60 561.5,151.81 561.9,151.89 562.3,152.23 562.7,149.18 563.1,149.84 563.5,149.97 563.9,150.85 564.3,150.91 564.7,151.18 565.1,151.41 565.5,151.91 565.9,151.97 566.3,152.17 566.7,152.28 567.1,152.37 567.5,152.41 567.9,152.50 568.3,148.55 568.7,148.44 569.1,148.86 569.5,149.86 569.9,150.10 570.3,150.86 570.7,151.10 571.1,151.25 571.5,151.52 571.9,151.97 572.3,151.92 572.7,152.23 573.1,152.29 573.5,152.41 573.9,152.45 574.3,152.53 574.7,151.18 575.1,148.63 575.5,149.28 575.9,150.11 576.3,150.75 576.7,151.12 577.1,151.50 577.5,151.46 577.9,149.35 578.3,149.47 578.7,150.69 579.1,151.19 579.5,151.16 579.9,151.71 580.3,151.58 580.7,149.90 581.1,150.16 581.5,150.83 581.9,151.31 582.3,151.31 582.7,151.69 583.1,151.77 583.5,149.82 583.9,150.11 584.3,150.85 584.7,151.23 585.1,151.45 585.5,151.81 585.9,151.76 586.3,151.65 586.7,151.02 587.1,151.33 587.5,151.62 587.9,151.58 588.3,152.01 588.7,152.06 589.1,152.26 589.5,152.22 589.9,152.45 590.3,152.42 590.7,152.50 591.1,152.57 591.5,152.58 591.9,152.58 592.3,152.58 592.7,152.58 593.1,152.58 593.5,152.58 593.9,152.58 594.3,152.58 594.7,152.58 595.1,152.58 595.5,152.58 595.9,152.58 596.3,152.58 596.7,151.84 597.1,149.85 597.5,150.24 597.9,150.62 598.3,150.94 598.7,151.02 599.1,151.17 599.5,151.46 599.9,151.64 600.3,151.97 600.7,152.21 601.1,152.22 601.5,152.27 601.9,151.47 602.3,151.18 602.7,151.23 603.1,151.50 603.5,151.72 603.9,151.81 604.3,152.12 604.7,152.18 605.1,152.27 605.5,152.31 605.9,152.41 606.3,152.49 606.7,152.56 607.1,152.58 607.5,152.58 607.9,152.58 608.3,152.58 608.7,152.58 609.1,152.58 609.5,152.58 609.9,152.58 610.3,152.58 610.7,152.58 611.1,152.58 611.5,152.58 611.9,152.58 612.3,152.58 612.7,152.58 613.1,152.58 613.5,152.58 613.9,152.58 614.3,152.58 614.7,152.58 615.1,152.58 615.5,152.58 615.9,152.58 616.3,152.58 616.7,151.58 617.1,149.49 617.5,150.33 617.9,150.44 618.3,150.87 618.7,151.43 619.1,151.71 619.5,151.76 619.9,151.99 620.3,152.23 620.7,152.26 621.1,152.40 621.5,152.42 621.9,150.26 622.3,150.32 622.7,150.62 623.1,151.13 623.5,151.50 623.9,151.84 624.3,151.92 624.7,152.20 625.1,152.31 625.5,152.46 625.9,150.61 626.3,149.86 626.7,150.76 627.1,151.16 627.5,151.53 627.9,151.88 628.3,152.01 628.7,152.22 629.1,152.35 629.5,152.40 629.9,150.90 630.3,150.65 630.7,150.83 631.1,151.39 631.5,151.57 631.9,151.96 632.3,152.14 632.7,152.33 633.1,152.41 633.5,152.46 633.9,152.56 634.3,152.58 634.7,152.58 635.1,152.58 635.5,152.58 635.9,152.58 636.3,152.58 636.7,152.58 637.1,152.58 637.5,152.58 637.9,151.46 638.3,149.13 638.7,149.79 639.1,150.25 639.5,150.72 639.9,151.07 640.3,151.46 640.7,151.64 641.1,149.47 641.5,149.92 641.9,151.10 642.3,151.50 642.7,151.56 643.1,151.90 643.5,150.41 643.9,149.95 644.3,150.64 644.7,151.25 645.1,151.28 645.5,151.78 645.9,151.94 646.3,152.07 646.7,152.27 647.1,152.28 647.5,152.37 647.9,152.45 648.3,152.53 648.7,152.58 649.1,152.58 649.5,152.58 649.9,150.88 650.3,151.03 650.7,151.54 651.1,151.82 651.5,151.93 651.9,152.17 652.3,152.34 652.7,152.45 653.1,152.56 653.5,152.58 653.9,150.93 654.3,150.71 654.7,151.57 655.1,151.75 655.5,151.89 655.9,152.16 656.3,152.34 656.7,152.08 657.1,150.41 657.5,151.32 657.9,151.91 658.3,152.12 658.7,152.37 659.1,148.72 659.5,147.04 659.9,147.30 660.3,147.41 660.7,148.74 661.1,149.37 661.5,149.61 661.9,149.82 662.3,150.44 662.7,150.46 663.1,150.65 663.5,151.23 663.9,151.32 664.3,151.62 664.7,151.73 665.1,151.80 665.5,151.96 665.9,152.07 666.3,152.24 666.7,152.15 667.1,152.39 667.5,152.33 667.9,152.40 668.3,152.47 668.7,152.53 669.1,152.58 669.5,152.58 669.9,151.88 670.3,151.76 670.7,151.87 671.1,151.65 671.5,151.89 671.9,151.74 672.3,152.06 672.7,152.05 673.1,152.28 673.5,152.30 673.9,152.46 674.3,152.47 674.7,152.54 675.1,152.58 675.5,152.58 675.9,152.58 676.3,152.58 676.7,152.44 677.1,151.75 677.5,151.80 677.9,151.94 678.3,152.15 678.7,152.20 679.1,152.27 679.5,152.36 679.9,152.43 680.3,152.51 680.7,152.58 681.1,152.58 681.5,152.58 681.9,152.58 682.3,152.58 682.7,152.01 683.1,150.81 683.5,151.02 683.9,151.28 684.3,151.63 684.7,151.86 685.1,152.11 685.5,152.29 685.9,152.48 686.3,152.50 686.7,152.58 687.1,152.58 687.5,151.75 687.9,149.43 688.3,150.31 688.7,150.79 689.1,151.15 689.5,151.42 689.9,151.84 690.3,151.84 690.7,152.21 691.1,152.32 691.5,152.40 691.9,152.45 692.3,152.54 692.7,152.58 693.1,152.58 693.5,152.58 693.9,152.31 694.3,149.43 694.7,149.70 695.1,150.38 695.5,151.28 695.9,151.49 696.3,151.59 696.7,151.90 697.1,152.10 697.5,150.21 697.9,150.69 698.3,151.27 698.7,151.46 699.1,151.73 699.5,152.00 699.9,152.21 700.3,152.48 700.7,152.50 701.1,152.58 701.5,150.34 701.9,145.48 702.3,146.43 702.7,146.87 703.1,147.48 703.5,148.49 703.9,148.25 704.3,149.16 704.7,148.88 705.1,149.86 705.5,150.13 705.9,150.33 706.3,150.49 706.7,150.65 707.1,150.59 707.5,150.89 707.9,150.95 708.3,151.38 708.7,151.46 709.1,151.49 709.5,151.82 709.9,151.78 710.3,151.94 710.7,151.94 711.1,152.02 711.5,152.27 711.9,152.31 712.3,152.30 712.7,152.43 713.1,152.44 713.5,152.42 713.9,152.47 714.3,152.51 714.7,152.56 715.1,152.58 715.5,152.58 715.9,152.58 716.3,152.58 716.7,152.58 717.1,152.58 717.5,152.58 717.9,152.58 718.3,152.58 718.7,152.58 719.1,152.58 719.5,152.58 719.9,152.58 720.3,152.58 720.7,152.58 721.1,152.58 721.5,152.58 721.9,152.58 722.3,150.77 722.7,149.55 723.1,149.56 723.5,149.96 723.9,149.69 724.3,149.71 724.7,150.28 725.1,150.55 725.5,150.63 725.9,150.84 726.3,151.13 726.7,151.68 727.1,151.69 727.5,151.93 727.9,152.05 728.3,152.25 728.7,152.20 729.1,151.67 729.5,149.80 729.9,149.48 730.3,149.87 730.7,149.86 731.1,150.12 731.5,150.48 731.9,150.91 732.3,151.12 732.7,151.56 733.1,151.81 733.5,151.80 733.9,151.96 734.3,152.22 734.7,152.28 735.1,152.38 735.5,152.43 735.9,150.81 736.3,150.17 736.7,150.17 737.1,150.51 737.5,150.66 737.9,151.00 738.3,151.45 738.7,151.78 739.1,152.02 739.5,152.04 739.9,152.18 740.3,152.35 740.7,152.45 741.1,152.49 741.5,152.57 741.9,152.58 742.3,152.58 742.7,151.03 743.1,148.58 743.5,149.06 743.9,150.15 744.3,150.37 744.7,150.62 745.1,150.89 745.5,151.32 745.9,151.82 746.3,152.00 746.7,151.57 747.1,149.21 747.5,150.26 747.9,150.65 748.3,151.34 748.7,151.42 749.1,151.66 749.5,151.99 749.9,150.34 750.3,150.31 750.7,150.87 751.1,151.19 751.5,151.31 751.9,151.67 752.3,151.75 752.7,151.79 753.1,152.13 753.5,152.24 753.9,152.36 754.3,152.37 754.7,152.43 755.1,152.51 755.5,152.58 755.9,152.58 756.3,152.58 756.7,152.58 757.1,152.58 757.5,152.58 757.9,151.45 758.3,151.24 758.7,151.77 759.1,151.96 759.5,152.04 759.9,152.22 760.3,152.45 760.7,152.47 761.1,152.57 761.5,152.58 761.9,152.58 762.3,152.58 762.7,152.58 763.1,152.58 763.5,152.58 763.9,152.58 764.3,150.96 764.7,150.63 765.1,150.77 765.5,151.09 765.9,151.02 766.3,151.47 766.7,151.75 767.1,151.97 767.5,152.17 767.9,151.22 768.3,151.05 768.7,151.38 769.1,151.92 769.5,152.00 769.9,152.32 770.3,152.46 770.7,152.49 771.1,152.58 771.5,152.58 771.9,151.41 772.3,151.26 772.7,151.69 773.1,151.92 773.5,152.24 773.9,152.40 774.3,152.45 774.7,152.57 775.1,152.58 775.5,152.58 775.9,152.58 776.3,152.58 776.7,152.58 777.1,152.58 777.5,152.58 777.9,152.58 778.3,152.58 778.7,151.71 779.1,151.96 779.5,152.02 779.9,152.25 780.3,152.44 780.7,152.45 781.1,152.56 781.5,152.58 781.9,152.58 782.3,152.58 782.7,152.58 783.1,152.58 783.5,152.58 783.9,152.58 784.3,152.58 784.7,152.58 785.1,152.58 785.5,149.49 785.9,149.60 786.3,150.12 786.7,150.41 787.1,150.84 787.5,151.42 787.9,151.55 788.3,151.98 788.7,152.17 789.1,151.67 789.5,150.04 789.9,150.44 790.3,150.96 790.7,151.42 791.1,151.63 791.5,151.90 791.9,152.14 792.3,152.32 792.7,152.05 793.1,150.78 793.5,150.99 793.9,150.78 794.3,151.30 794.7,151.43 795.1,151.78 795.5,152.11 795.9,152.16 796.3,152.38 796.7,152.04 797.1,150.45 797.5,150.71 797.9,150.55 798.3,150.86 798.7,150.65 799.1,150.80 799.5,151.45 799.9,151.75 799.9,153.93 799.5,154.34 799.1,154.66 798.7,154.57 798.3,154.79 797.9,154.75 797.5,154.95 797.1,154.84 796.7,153.75 796.3,153.45 795.9,153.64 795.5,153.75 795.1,154.03 794.7,154.04 794.3,154.33 793.9,154.59 793.5,154.66 793.1,154.96 792.7,153.69 792.3,153.54 791.9,153.64 791.5,153.81 791.1,153.94 790.7,154.36 790.3,154.54 789.9,155.36 789.5,155.15 789.1,153.99 788.7,153.71 788.3,153.83 787.9,153.98 787.5,154.41 787.1,154.40 786.7,155.10 786.3,155.40 785.9,156.20 785.5,155.43 785.1,153.42 784.7,153.42 784.3,153.42 783.9,153.42 783.5,153.42 783.1,153.42 782.7,153.42 782.3,153.42 781.9,153.42 781.5,153.42 781.1,153.44 780.7,153.55 780.3,153.49 779.9,153.66 779.5,153.72 779.1,154.01 778.7,154.21 778.3,153.42 777.9,153.42 777.5,153.42 777.1,153.42 776.7,153.42 776.3,153.42 775.9,153.42 775.5,153.42 775.1,153.42 774.7,153.43 774.3,153.55 773.9,153.55 773.5,153.60 773.1,153.83 772.7,154.12 772.3,154.40 771.9,154.26 771.5,153.42 771.1,153.42 770.7,153.51 770.3,153.41 769.9,153.53 769.5,153.77 769.1,154.03 768.7,154.13 768.3,154.62 767.9,154.29 767.5,153.77 767.1,153.94 766.7,154.08 766.3,154.35 765.9,154.81 765.5,154.95 765.1,154.64 764.7,154.77 764.3,154.38 763.9,153.42 763.5,153.42 763.1,153.42 762.7,153.42 762.3,153.42 761.9,153.42 761.5,153.42 761.1,153.43 760.7,153.53 760.3,153.41 759.9,153.64 759.5,153.65 759.1,153.92 758.7,154.16 758.3,154.51 757.9,154.20 757.5,153.42 757.1,153.42 756.7,153.42 756.3,153.42 755.9,153.42 755.5,153.42 755.1,153.49 754.7,153.57 754.3,153.49 753.9,153.51 753.5,153.63 753.1,153.70 752.7,153.90 752.3,154.13 751.9,154.21 751.5,154.51 751.1,154.68 750.7,155.00 750.3,155.47 749.9,154.96 749.5,153.75 749.1,153.96 748.7,154.10 748.3,154.28 747.9,154.96 747.5,155.21 747.1,155.64 746.7,154.04 746.3,153.90 745.9,153.97 745.5,154.14 745.1,154.40 744.7,154.72 744.3,155.20 743.9,155.21 743.5,156.48 743.1,156.38 742.7,154.65 742.3,153.42 741.9,153.42 741.5,153.43 741.1,153.51 740.7,153.45 740.3,153.52 739.9,153.60 739.5,153.65 739.1,153.78 738.7,153.91 738.3,154.27 737.9,154.27 737.5,154.72 737.1,154.77 736.7,155.08 736.3,155.36 735.9,155.04 735.5,153.57 735.1,153.46 734.7,153.54 734.3,153.69 733.9,153.70 733.5,153.91 733.1,154.04 732.7,154.09 732.3,154.53 731.9,154.46 731.5,155.12 731.1,155.05 730.7,155.67 730.3,155.38 729.9,155.49 729.5,155.63 729.1,153.99 728.7,153.55 728.3,153.67 727.9,153.85 727.5,153.95 727.1,154.15 726.7,154.09 726.3,154.38 725.9,154.50 725.5,154.82 725.1,154.97 724.7,155.12 724.3,155.46 723.9,155.64 723.5,156.02 723.1,155.60 722.7,155.76 722.3,154.74 721.9,153.42 721.5,153.42 721.1,153.42 720.7,153.42 720.3,153.42 719.9,153.42 719.5,153.42 719.1,153.42 718.7,153.42 718.3,153.42 717.9,153.42 717.5,153.42 717.1,153.42 716.7,153.42 716.3,153.42 715.9,153.42 715.5,153.42 715.1,153.42 714.7,153.44 714.3,153.49 713.9,153.53 713.5,153.58 713.1,153.46 712.7,153.48 712.3,153.48 711.9,153.65 711.5,153.63 711.1,153.73 710.7,153.76 710.3,153.78 709.9,153.91 709.5,154.11 709.1,153.99 708.7,154.34 708.3,154.23 707.9,154.30 707.5,154.74 707.1,154.78 706.7,154.76 706.3,155.21 705.9,155.35 705.5,155.73 705.1,155.45 704.7,156.10 704.3,156.28 703.9,156.42 703.5,157.41 703.1,157.69 702.7,157.31 702.3,157.42 701.9,159.31 701.5,155.27 701.1,153.42 700.7,153.50 700.3,153.48 699.9,153.63 699.5,153.74 699.1,153.95 698.7,154.15 698.3,154.41 697.9,155.15 697.5,155.31 697.1,153.60 696.7,153.75 696.3,154.03 695.9,154.14 695.5,154.65 695.1,154.97 694.7,155.24 694.3,155.97 693.9,153.61 693.5,153.42 693.1,153.42 692.7,153.42 692.3,153.46 691.9,153.55 691.5,153.45 691.1,153.52 690.7,153.76 690.3,153.86 689.9,153.95 689.5,154.21 689.1,154.52 688.7,154.87 688.3,155.49 687.9,155.70 687.5,154.04 687.1,153.42 686.7,153.42 686.3,153.50 685.9,153.45 685.5,153.56 685.1,153.59 684.7,153.84 684.3,154.12 683.9,154.35 683.5,154.64 683.1,154.70 682.7,153.75 682.3,153.42 681.9,153.42 681.5,153.42 681.1,153.42 680.7,153.42 680.3,153.49 679.9,153.57 679.5,153.52 679.1,153.49 678.7,153.60 678.3,153.67 677.9,153.96 677.5,153.84 677.1,153.88 676.7,153.56 676.3,153.42 675.9,153.42 675.5,153.42 675.1,153.42 674.7,153.46 674.3,153.53 673.9,153.45 673.5,153.49 673.1,153.56 672.7,153.74 672.3,153.88 671.9,154.03 671.5,153.99 671.1,153.94 670.7,154.09 670.3,153.96 669.9,153.81 669.5,153.42 669.1,153.42 668.7,153.47 668.3,153.53 667.9,153.60 667.5,153.49 667.1,153.57 666.7,153.65 666.3,153.60 665.9,153.71 665.5,153.86 665.1,153.88 664.7,154.15 664.3,154.17 663.9,154.29 663.5,154.48 663.1,154.91 662.7,154.97 662.3,155.33 661.9,155.68 661.5,156.05 661.1,156.24 660.7,156.93 660.3,156.89 659.9,157.48 659.5,157.77 659.1,156.39 658.7,153.48 658.3,153.66 657.9,153.94 657.5,154.25 657.1,154.92 656.7,153.79 656.3,153.54 655.9,153.56 655.5,153.73 655.1,154.02 654.7,154.35 654.3,154.75 653.9,154.69 653.5,153.42 653.1,153.44 652.7,153.55 652.3,153.54 651.9,153.62 651.5,153.72 651.1,154.12 650.7,154.38 650.3,154.66 649.9,154.60 649.5,153.42 649.1,153.42 648.7,153.42 648.3,153.47 647.9,153.55 647.5,153.48 647.1,153.51 646.7,153.63 646.3,153.76 645.9,153.86 645.5,153.97 645.1,154.37 644.7,154.70 644.3,154.69 643.9,155.17 643.5,154.85 643.1,153.94 642.7,154.07 642.3,154.42 641.9,154.58 641.5,155.45 641.1,155.74 640.7,154.12 640.3,154.43 639.9,154.51 639.5,154.71 639.1,155.27 638.7,155.88 638.3,156.37 637.9,154.45 637.5,153.42 637.1,153.42 636.7,153.42 636.3,153.42 635.9,153.42 635.5,153.42 635.1,153.42 634.7,153.42 634.3,153.42 633.9,153.44 633.5,153.54 633.1,153.44 632.7,153.64 632.3,153.79 631.9,153.92 631.5,153.98 631.1,154.42 630.7,154.46 630.3,154.97 629.9,154.93 629.5,153.44 629.1,153.49 628.7,153.64 628.3,153.77 627.9,154.07 627.5,154.07 627.1,154.42 626.7,154.60 626.3,155.13 625.9,154.82 625.5,153.42 625.1,153.60 624.7,153.74 624.3,153.76 623.9,153.96 623.5,154.34 623.1,154.62 622.7,154.68 622.3,155.47 621.9,155.15 621.5,153.58 621.1,153.50 620.7,153.65 620.3,153.75 619.9,153.79 619.5,153.93 619.1,154.26 618.7,154.28 618.3,154.56 617.9,154.84 617.5,155.11 617.1,155.94 616.7,154.22 616.3,153.42 615.9,153.42 615.5,153.42 615.1,153.42 614.7,153.42 614.3,153.42 613.9,153.42 613.5,153.42 613.1,153.42 612.7,153.42 612.3,153.42 611.9,153.42 611.5,153.42 611.1,153.42 610.7,153.42 610.3,153.42 609.9,153.42 609.5,153.42 609.1,153.42 608.7,153.42 608.3,153.42 607.9,153.42 607.5,153.42 607.1,153.42 606.7,153.44 606.3,153.51 605.9,153.59 605.5,153.49 605.1,153.63 604.7,153.68 604.3,153.76 603.9,153.92 603.5,154.18 603.1,154.27 602.7,154.32 602.3,154.45 601.9,154.36 601.5,153.56 601.1,153.61 600.7,153.64 600.3,153.92 599.9,153.90 599.5,154.23 599.1,154.27 598.7,154.39 598.3,154.84 597.9,154.96 597.5,155.18 597.1,155.55 596.7,153.91 596.3,153.42 595.9,153.42 595.5,153.42 595.1,153.42 594.7,153.42 594.3,153.42 593.9,153.42 593.5,153.42 593.1,153.42 592.7,153.42 592.3,153.42 591.9,153.42 591.5,153.42 591.1,153.43 590.7,153.50 590.3,153.58 589.9,153.46 589.5,153.59 589.1,153.61 588.7,153.81 588.3,153.86 587.9,154.02 587.5,154.08 587.1,154.51 586.7,154.87 586.3,154.06 585.9,153.85 585.5,154.04 585.1,154.31 584.7,154.52 584.3,154.69 583.9,155.23 583.5,155.60 583.1,154.11 582.7,154.07 582.3,154.28 581.9,154.53 581.5,154.71 581.1,155.34 580.7,155.49 580.3,154.03 579.9,154.08 579.5,154.33 579.1,154.64 578.7,155.01 578.3,155.41 577.9,155.86 577.5,154.12 577.1,154.31 576.7,154.36 576.3,154.64 575.9,154.87 575.5,156.03 575.1,156.26 574.7,154.39 574.3,153.47 573.9,153.55 573.5,153.42 573.1,153.53 572.7,153.64 572.3,153.86 571.9,153.93 571.5,154.19 571.1,154.43 570.7,154.73 570.3,154.76 569.9,155.08 569.5,155.86 569.1,156.08 568.7,156.68 568.3,156.65 567.9,153.50 567.5,153.59 567.1,153.54 566.7,153.54 566.3,153.63 565.9,153.83 565.5,153.89 565.1,154.23 564.7,154.25 564.3,154.65 563.9,155.00 563.5,155.14 563.1,155.58 562.7,156.51 562.3,153.60 561.9,153.74 561.5,153.83 561.1,154.13 560.7,154.32 560.3,154.72 559.9,154.98 559.5,155.33 559.1,156.02 558.7,156.32 558.3,154.31 557.9,154.10 557.5,154.30 557.1,154.36 556.7,154.87 556.3,154.90 555.9,155.34 555.5,155.42 555.1,156.49 554.7,156.64 554.3,155.16 553.9,153.42 553.5,153.42 553.1,153.42 552.7,153.42 552.3,153.42 551.9,153.42 551.5,153.42 551.1,153.42 550.7,153.42 550.3,153.42 549.9,153.42 549.5,153.44 549.1,153.49 548.7,153.54 548.3,153.41 547.9,153.42 547.5,153.50 547.1,153.52 546.7,153.61 546.3,153.79 545.9,153.87 545.5,153.73 545.1,153.75 544.7,153.74 544.3,153.89 543.9,153.92 543.5,153.91 543.1,153.84 542.7,153.81 542.3,153.81 541.9,153.85 541.5,153.95 541.1,153.90 540.7,153.79 540.3,153.82 539.9,153.72 539.5,153.42 539.1,153.42 538.7,153.42 538.3,153.42 537.9,153.42 537.5,153.42 537.1,153.42 536.7,153.42 536.3,153.48 535.9,153.59 535.5,153.47 535.1,153.58 534.7,153.74 534.3,154.02 533.9,154.22 533.5,154.63 533.1,153.55 532.7,153.42 532.3,153.42 531.9,153.42 531.5,153.42 531.1,153.42 530.7,153.42 530.3,153.42 529.9,153.42 529.5,153.42 529.1,153.43 528.7,153.53 528.3,153.52 527.9,153.56 527.5,153.63 527.1,153.96 526.7,154.16 526.3,154.23 525.9,154.12 525.5,153.42 525.1,153.42 524.7,153.42 524.3,153.42 523.9,153.42 523.5,153.42 523.1,153.42 522.7,153.43 522.3,153.53 521.9,153.43 521.5,153.59 521.1,153.68 520.7,153.77 520.3,154.06 519.9,154.40 519.5,154.27 519.1,153.42 518.7,153.42 518.3,153.42 517.9,153.42 517.5,153.42 517.1,153.48 516.7,153.58 516.3,153.53 515.9,153.56 515.5,153.77 515.1,153.83 514.7,154.15 514.3,154.40 513.9,154.37 513.5,154.74 513.1,154.75 512.7,154.59 512.3,154.89 511.9,154.54 511.5,153.42 511.1,153.42 510.7,153.42 510.3,153.42 509.9,153.42 509.5,153.42 509.1,153.42 508.7,153.42 508.3,153.42 507.9,153.42 507.5,153.42 507.1,153.42 506.7,153.42 506.3,153.42 505.9,153.42 505.5,153.42 505.1,153.42 504.7,153.42 504.3,153.42 503.9,153.42 503.5,153.49 503.1,153.58 502.7,153.51 502.3,153.50 501.9,153.67 501.5,153.67 501.1,153.99 500.7,154.07 500.3,154.09 499.9,153.78 499.5,153.47 499.1,153.52 498.7,153.51 498.3,153.59 497.9,153.63 497.5,153.89 497.1,154.04 496.7,154.11 496.3,154.06 495.9,154.27 495.5,154.40 495.1,154.76 494.7,155.23 494.3,155.22 493.9,155.56 493.5,156.01 493.1,156.04 492.7,156.88 492.3,157.80 491.9,157.85 491.5,157.26 491.1,153.42 490.7,153.43 490.3,153.56 489.9,153.56 489.5,153.59 489.1,153.77 488.7,154.09 488.3,154.33 487.9,155.15 487.5,155.46 487.1,153.49 486.7,153.62 486.3,153.77 485.9,153.90 485.5,154.19 485.1,154.64 484.7,155.37 484.3,154.53 483.9,153.52 483.5,153.63 483.1,153.92 482.7,154.23 482.3,154.35 481.9,155.05 481.5,155.26 481.1,153.48 480.7,153.46 480.3,153.56 479.9,153.48 479.5,153.64 479.1,153.73 478.7,153.76 478.3,154.04 477.9,154.41 477.5,154.69 477.1,154.90 476.7,155.40 476.3,154.33 475.9,153.76 475.5,153.98 475.1,154.07 474.7,154.34 474.3,154.57 473.9,154.68 473.5,154.78 473.1,155.03 472.7,155.42 472.3,155.74 471.9,156.40 471.5,155.76 471.1,153.44 470.7,153.51 470.3,153.60 469.9,153.53 469.5,153.63 469.1,153.72 468.7,153.72 468.3,153.98 467.9,153.97 467.5,154.17 467.1,154.61 466.7,154.49 466.3,155.14 465.9,155.46 465.5,155.99 465.1,156.43 464.7,154.26 464.3,153.42 463.9,153.42 463.5,153.42 463.1,153.42 462.7,153.42 462.3,153.42 461.9,153.42 461.5,153.42 461.1,153.42 460.7,153.44 460.3,153.51 459.9,153.59 459.5,153.55 459.1,153.58 458.7,153.69 458.3,153.84 457.9,153.85 457.5,154.14 457.1,154.25 456.7,154.44 456.3,154.36 455.9,154.27 455.5,153.47 455.1,153.55 454.7,153.41 454.3,153.60 453.9,153.66 453.5,153.76 453.1,153.94 452.7,153.99 452.3,154.19 451.9,154.38 451.5,154.43 451.1,154.50 450.7,153.65 450.3,153.50 449.9,153.48 449.5,153.51 449.1,153.66 448.7,153.85 448.3,153.91 447.9,154.12 447.5,154.29 447.1,154.75 446.7,154.97 446.3,155.65 445.9,155.23 445.5,153.67 445.1,153.84 444.7,154.09 444.3,154.15 443.9,154.64 443.5,154.89 443.1,155.72 442.7,155.31 442.3,153.46 441.9,153.57 441.5,153.77 441.1,153.79 440.7,154.03 440.3,154.43 439.9,154.69 439.5,155.57 439.1,155.66 438.7,154.26 438.3,153.42 437.9,153.45 437.5,153.54 437.1,153.45 436.7,153.52 436.3,153.75 435.9,153.79 435.5,153.95 435.1,154.21 434.7,154.52 434.3,154.77 433.9,155.47 433.5,155.87 433.1,153.98 432.7,154.30 432.3,154.63 431.9,154.87 431.5,155.79 431.1,155.90 430.7,154.13 430.3,154.04 429.9,154.30 429.5,154.73 429.1,155.31 428.7,155.93 428.3,154.21 427.9,153.50 427.5,153.55 427.1,153.59 426.7,153.81 426.3,153.91 425.9,153.96 425.5,154.19 425.1,154.27 424.7,154.64 424.3,154.56 423.9,154.78 423.5,155.01 423.1,155.39 422.7,156.10 422.3,156.63 421.9,156.82 421.5,157.66 421.1,155.89 420.7,153.42 420.3,153.42 419.9,153.42 419.5,153.50 419.1,153.40 418.7,153.47 418.3,153.60 417.9,153.83 417.5,154.00 417.1,154.00 416.7,154.26 416.3,154.83 415.9,155.18 415.5,155.43 415.1,155.55 414.7,155.02 414.3,153.42 413.9,153.42 413.5,153.42 413.1,153.42 412.7,153.49 412.3,153.58 411.9,153.54 411.5,153.60 411.1,153.66 410.7,153.87 410.3,154.06 409.9,154.25 409.5,154.53 409.1,154.70 408.7,155.12 408.3,155.08 407.9,155.22 407.5,155.74 407.1,153.46 406.7,153.42 406.3,153.42 405.9,153.42 405.5,153.42 405.1,153.42 404.7,153.42 404.3,153.42 403.9,153.42 403.5,153.42 403.1,153.42 402.7,153.42 402.3,153.42 401.9,153.42 401.5,153.42 401.1,153.44 400.7,153.48 400.3,153.52 399.9,153.56 399.5,153.45 399.1,153.43 398.7,153.53 398.3,153.60 397.9,153.58 397.5,153.68 397.1,153.80 396.7,153.84 396.3,153.85 395.9,153.91 395.5,154.06 395.1,154.05 394.7,154.30 394.3,154.37 393.9,154.32 393.5,154.75 393.1,154.71 392.7,154.73 392.3,155.08 391.9,155.14 391.5,155.33 391.1,155.32 390.7,155.67 390.3,156.43 389.9,156.34 389.5,156.38 389.1,156.54 388.7,157.57 388.3,158.36 387.9,157.89 387.5,158.04 387.1,158.69 386.7,159.88 386.3,160.48 385.9,154.38 385.5,153.42 385.1,153.42 384.7,153.42 384.3,153.42 383.9,153.42 383.5,153.42 383.1,153.42 382.7,153.42 382.3,153.42 381.9,153.42 381.5,153.42 381.1,153.42 380.7,153.42 380.3,153.42 379.9,153.42 379.5,153.42 379.1,153.42 378.7,153.42 378.3,153.42 377.9,153.42 377.5,153.42 377.1,153.42 376.7,153.42 376.3,153.42 375.9,153.42 375.5,153.42 375.1,153.42 374.7,153.42 374.3,153.42 373.9,153.42 373.5,153.42 373.1,153.42 372.7,153.42 372.3,153.42 371.9,153.42 371.5,153.42 371.1,153.42 370.7,153.42 370.3,153.42 369.9,153.42 369.5,153.42 369.1,153.42 368.7,153.42 368.3,153.43 367.9,153.53 367.5,153.43 367.1,153.55 366.7,153.68 366.3,153.83 365.9,153.86 365.5,153.42 365.1,153.42 364.7,153.42 364.3,153.42 363.9,153.42 363.5,153.42 363.1,153.42 362.7,153.42 362.3,153.42 361.9,153.42 361.5,153.42 361.1,153.42 360.7,153.42 360.3,153.43 359.9,153.53 359.5,153.42 359.1,153.62 358.7,153.75 358.3,154.00 357.9,153.74 357.5,153.42 357.1,153.42 356.7,153.42 356.3,153.42 355.9,153.42 355.5,153.42 355.1,153.48 354.7,153.58 354.3,153.52 353.9,153.57 353.5,153.86 353.1,153.89 352.7,153.56 352.3,153.42 351.9,153.42 351.5,153.42 351.1,153.43 350.7,153.53 350.3,153.48 349.9,153.52 349.5,153.83 349.1,153.87 348.7,153.51 348.3,153.42 347.9,153.42 347.5,153.42 347.1,153.48 346.7,153.58 346.3,153.46 345.9,153.65 345.5,153.79 345.1,154.08 344.7,153.56 344.3,153.42 343.9,153.42 343.5,153.42 343.1,153.42 342.7,153.42 342.3,153.42 341.9,153.42 341.5,153.42 341.1,153.42 340.7,153.42 340.3,153.42 339.9,153.42 339.5,153.42 339.1,153.42 338.7,153.42 338.3,153.42 337.9,153.42 337.5,153.42 337.1,153.42 336.7,153.42 336.3,153.42 335.9,153.42 335.5,153.42 335.1,153.42 334.7,153.42 334.3,153.42 333.9,153.44 333.5,153.49 333.1,153.55 332.7,153.46 332.3,153.46 331.9,153.57 331.5,153.62 331.1,153.64 330.7,153.83 330.3,153.79 329.9,153.84 329.5,153.93 329.1,154.26 328.7,154.16 328.3,154.41 327.9,154.80 327.5,154.81 327.1,155.00 326.7,155.45 326.3,155.35 325.9,155.56 325.5,156.04 325.1,156.09 324.7,156.77 324.3,157.25 323.9,157.33 323.5,159.01 323.1,156.32 322.7,153.42 322.3,153.42 321.9,153.42 321.5,153.42 321.1,153.42 320.7,153.49 320.3,153.57 319.9,153.46 319.5,153.51 319.1,153.71 318.7,153.79 318.3,153.81 317.9,153.97 317.5,154.10 317.1,154.46 316.7,154.53 316.3,154.86 315.9,153.77 315.5,154.16 315.1,154.20 314.7,154.61 314.3,154.79 313.9,155.43 313.5,153.89 313.1,153.96 312.7,154.21 312.3,154.40 311.9,154.51 311.5,155.10 311.1,155.62 310.7,153.95 310.3,154.20 309.9,154.30 309.5,154.60 309.1,155.25 308.7,155.82 308.3,156.03 307.9,153.95 307.5,154.14 307.1,154.37 306.7,154.45 306.3,154.80 305.9,155.70 305.5,156.12 305.1,154.04 304.7,154.37 304.3,154.69 303.9,154.65 303.5,155.38 303.1,155.52 302.7,155.85 302.3,155.48 301.9,153.42 301.5,153.42 301.1,153.42 300.7,153.42 300.3,153.42 299.9,153.45 299.5,153.56 299.1,153.46 298.7,153.54 298.3,153.66 297.9,153.82 297.5,154.24 297.1,154.26 296.7,153.63 296.3,153.42 295.9,153.48 295.5,153.59 295.1,153.49 294.7,153.67 294.3,153.75 293.9,153.87 293.5,154.04 293.1,154.49 292.7,153.60 292.3,153.42 291.9,153.48 291.5,153.59 291.1,153.56 290.7,153.71 290.3,153.72 289.9,153.90 289.5,154.30 289.1,154.56 288.7,153.54 288.3,153.42 287.9,153.42 287.5,153.42 287.1,153.42 286.7,153.44 286.3,153.50 285.9,153.57 285.5,153.50 285.1,153.50 284.7,153.56 284.3,153.67 283.9,153.68 283.5,153.96 283.1,154.04 282.7,154.13 282.3,154.16 281.9,154.46 281.5,154.69 281.1,155.09 280.7,155.02 280.3,155.71 279.9,155.74 279.5,156.47 279.1,156.31 278.7,154.34 278.3,153.68 277.9,153.77 277.5,154.01 277.1,154.08 276.7,154.20 276.3,154.54 275.9,154.80 275.5,155.04 275.1,155.81 274.7,154.18 274.3,153.42 273.9,153.42 273.5,153.42 273.1,153.44 272.7,153.50 272.3,153.58 271.9,153.48 271.5,153.58 271.1,153.55 270.7,153.75 270.3,153.86 269.9,154.03 269.5,154.06 269.1,154.12 268.7,154.52 268.3,154.83 267.9,155.07 267.5,155.39 267.1,155.58 266.7,155.43 266.3,154.25 265.9,154.59 265.5,154.84 265.1,154.97 264.7,155.67 264.3,156.46 263.9,154.36 263.5,154.56 263.1,154.72 262.7,154.92 262.3,155.52 261.9,155.96 261.5,155.01 261.1,153.75 260.7,153.82 260.3,153.92 259.9,154.19 259.5,154.22 259.1,154.51 258.7,154.50 258.3,154.70 257.9,154.81 257.5,155.27 257.1,155.65 256.7,155.53 256.3,156.29 255.9,156.17 255.5,156.78 255.1,157.57 254.7,158.39 254.3,159.27 253.9,155.31 253.5,153.42 253.1,153.42 252.7,153.44 252.3,153.51 251.9,153.59 251.5,153.43 251.1,153.51 250.7,153.62 250.3,153.74 249.9,153.87 249.5,153.99 249.1,154.14 248.7,154.35 248.3,154.53 247.9,155.18 247.5,155.22 247.1,154.04 246.7,153.42 246.3,153.42 245.9,153.44 245.5,153.51 245.1,153.58 244.7,153.50 244.3,153.61 243.9,153.59 243.5,153.80 243.1,153.76 242.7,154.03 242.3,154.04 241.9,154.42 241.5,154.64 241.1,154.69 240.7,154.85 240.3,155.22 239.9,154.74 239.5,153.42 239.1,153.42 238.7,153.42 238.3,153.42 237.9,153.42 237.5,153.42 237.1,153.42 236.7,153.42 236.3,153.42 235.9,153.43 235.5,153.47 235.1,153.50 234.7,153.54 234.3,153.58 233.9,153.49 233.5,153.45 233.1,153.56 232.7,153.61 232.3,153.60 231.9,153.67 231.5,153.69 231.1,153.73 230.7,153.85 230.3,153.86 229.9,153.87 229.5,154.01 229.1,154.15 228.7,154.16 228.3,154.26 227.9,154.33 227.5,154.54 227.1,154.42 226.7,154.47 226.3,154.80 225.9,155.12 225.5,155.28 225.1,155.21 224.7,155.64 224.3,155.53 223.9,155.84 223.5,155.84 223.1,155.99 222.7,156.78 222.3,157.12 221.9,157.16 221.5,156.79 221.1,157.70 220.7,158.19 220.3,158.80 219.9,159.22 219.5,158.45 219.1,159.10 218.7,156.03 218.3,153.42 217.9,153.42 217.5,153.42 217.1,153.42 216.7,153.42 216.3,153.42 215.9,153.42 215.5,153.42 215.1,153.42 214.7,153.42 214.3,153.42 213.9,153.42 213.5,153.42 213.1,153.42 212.7,153.42 212.3,153.42 211.9,153.42 211.5,153.42 211.1,153.42 210.7,153.42 210.3,153.42 209.9,153.42 209.5,153.42 209.1,153.42 208.7,153.42 208.3,153.42 207.9,153.42 207.5,153.42 207.1,153.42 206.7,153.42 206.3,153.42 205.9,153.42 205.5,153.42 205.1,153.42 204.7,153.42 204.3,153.42 203.9,153.42 203.5,153.42 203.1,153.42 202.7,153.42 202.3,153.42 201.9,153.42 201.5,153.42 201.1,153.42 200.7,153.42 200.3,153.42 199.9,153.42 199.5,153.42 199.1,153.42 198.7,153.42 198.3,153.42 197.9,153.42 197.5,153.42 197.1,153.42 196.7,153.42 196.3,153.42 195.9,153.42 195.5,153.42 195.1,153.42 194.7,153.42 194.3,153.42 193.9,153.42 193.5,153.42 193.1,153.42 192.7,153.42 192.3,153.42 191.9,153.42 191.5,153.42 191.1,153.42 190.7,153.42 190.3,153.42 189.9,153.42 189.5,153.42 189.1,153.42 188.7,153.42 188.3,153.42 187.9,153.42 187.5,153.42 187.1,153.42 186.7,153.42 186.3,153.42 185.9,153.42 185.5,153.42 185.1,153.42 184.7,153.42 184.3,153.42 183.9,153.42 183.5,153.42 183.1,153.42 182.7,153.42 182.3,153.42 181.9,153.42 181.5,153.42 181.1,153.42 180.7,153.42 180.3,153.42 179.9,153.42 179.5,153.42 179.1,153.42 178.7,153.42 178.3,153.42 177.9,153.42 177.5,153.42 177.1,153.42 176.7,153.42 176.3,153.42" fill="#f2f2f2" stroke="#3a2a3a" stroke-opacity="0.35" stroke-width="0.35"/><polygon points="176.3,188.88 176.7,188.88 177.1,188.88 177.5,188.88 177.9,188.88 178.3,188.88 178.7,188.88 179.1,188.88 179.5,188.88 179.9,188.88 180.3,188.88 180.7,188.88 181.1,188.88 181.5,188.88 181.9,188.88 182.3,188.88 182.7,188.88 183.1,188.88 183.5,188.88 183.9,188.88 184.3,188.88 184.7,188.88 185.1,188.88 185.5,188.88 185.9,188.88 186.3,188.88 186.7,188.88 187.1,188.88 187.5,188.88 187.9,188.88 188.3,188.88 188.7,188.88 189.1,188.88 189.5,188.88 189.9,188.88 190.3,188.88 190.7,188.88 191.1,188.88 191.5,188.88 191.9,188.88 192.3,188.88 192.7,188.88 193.1,188.88 193.5,188.88 193.9,188.88 194.3,188.88 194.7,188.88 195.1,188.88 195.5,188.88 195.9,188.88 196.3,188.88 196.7,188.88 197.1,188.88 197.5,188.88 197.9,188.88 198.3,188.88 198.7,188.88 199.1,188.88 199.5,188.88 199.9,188.88 200.3,188.88 200.7,188.88 201.1,188.88 201.5,188.88 201.9,188.88 202.3,188.88 202.7,188.88 203.1,188.88 203.5,188.88 203.9,188.88 204.3,188.88 204.7,188.88 205.1,188.88 205.5,188.88 205.9,188.88 206.3,188.88 206.7,188.88 207.1,188.88 207.5,188.88 207.9,188.88 208.3,188.88 208.7,188.88 209.1,188.88 209.5,188.88 209.9,188.88 210.3,188.88 210.7,188.88 211.1,188.88 211.5,188.88 211.9,188.88 212.3,188.88 212.7,188.88 213.1,188.88 213.5,188.88 213.9,188.88 214.3,188.88 214.7,188.88 215.1,188.88 215.5,188.88 215.9,188.88 216.3,188.88 216.7,188.88 217.1,188.88 217.5,188.88 217.9,188.88 218.3,188.88 218.7,187.23 219.1,184.96 219.5,185.76 219.9,185.82 220.3,185.75 220.7,186.24 221.1,186.44 221.5,186.60 221.9,186.61 222.3,187.09 222.7,186.96 223.1,187.06 223.5,187.38 223.9,187.54 224.3,187.71 224.7,187.61 225.1,187.57 225.5,187.79 225.9,187.88 226.3,187.93 226.7,188.15 227.1,188.01 227.5,188.18 227.9,188.20 228.3,188.26 228.7,188.30 229.1,188.35 229.5,188.51 229.9,188.58 230.3,188.54 230.7,188.64 231.1,188.70 231.5,188.71 231.9,188.64 232.3,188.74 232.7,188.70 233.1,188.73 233.5,188.75 233.9,188.78 234.3,188.80 234.7,188.82 235.1,188.84 235.5,188.86 235.9,188.87 236.3,188.88 236.7,188.88 237.1,188.88 237.5,188.88 237.9,188.88 238.3,188.88 238.7,188.88 239.1,188.88 239.5,188.88 239.9,187.97 240.3,187.72 240.7,187.91 241.1,188.00 241.5,188.23 241.9,188.25 242.3,188.33 242.7,188.53 243.1,188.56 243.5,188.68 243.9,188.67 244.3,188.70 244.7,188.75 245.1,188.80 245.5,188.84 245.9,188.87 246.3,188.88 246.7,188.88 247.1,188.60 247.5,187.59 247.9,187.83 248.3,188.17 248.7,188.33 249.1,188.41 249.5,188.35 249.9,188.59 250.3,188.61 250.7,188.71 251.1,188.69 251.5,188.74 251.9,188.79 252.3,188.84 252.7,188.87 253.1,188.88 253.5,188.88 253.9,187.83 254.3,185.28 254.7,186.10 255.1,186.06 255.5,186.93 255.9,186.96 256.3,187.25 256.7,187.33 257.1,187.57 257.5,187.60 257.9,187.95 258.3,188.18 258.7,188.11 259.1,188.28 259.5,188.27 259.9,188.39 260.3,188.55 260.7,188.51 261.1,188.70 261.5,187.83 261.9,187.21 262.3,187.43 262.7,187.65 263.1,187.95 263.5,188.01 263.9,188.22 264.3,187.20 264.7,187.27 265.1,187.85 265.5,187.98 265.9,188.12 266.3,188.44 266.7,187.55 267.1,187.40 267.5,187.81 267.9,187.98 268.3,187.93 268.7,188.29 269.1,188.22 269.5,188.47 269.9,188.59 270.3,188.61 270.7,188.59 271.1,188.76 271.5,188.71 271.9,188.76 272.3,188.80 272.7,188.84 273.1,188.87 273.5,188.88 273.9,188.88 274.3,188.88 274.7,188.38 275.1,187.28 275.5,187.56 275.9,187.96 276.3,188.17 276.7,188.37 277.1,188.34 277.5,188.52 277.9,188.67 278.3,188.66 278.7,188.15 279.1,186.71 279.5,186.92 279.9,187.46 280.3,187.46 280.7,187.89 281.1,187.93 281.5,188.03 281.9,188.30 282.3,188.42 282.7,188.41 283.1,188.46 283.5,188.59 283.9,188.67 284.3,188.65 284.7,188.79 285.1,188.72 285.5,188.77 285.9,188.81 286.3,188.84 286.7,188.87 287.1,188.88 287.5,188.88 287.9,188.88 288.3,188.88 288.7,188.77 289.1,188.17 289.5,188.31 289.9,188.48 290.3,188.57 290.7,188.79 291.1,188.73 291.5,188.79 291.9,188.85 292.3,188.88 292.7,188.79 293.1,188.18 293.5,188.42 293.9,188.57 294.3,188.67 294.7,188.67 295.1,188.73 295.5,188.79 295.9,188.85 296.3,188.88 296.7,188.74 297.1,188.26 297.5,188.48 297.9,188.46 298.3,188.58 298.7,188.67 299.1,188.75 299.5,188.81 299.9,188.86 300.3,188.88 300.7,188.88 301.1,188.88 301.5,188.88 301.9,188.88 302.3,187.58 302.7,187.18 303.1,187.31 303.5,187.57 303.9,187.87 304.3,188.24 304.7,188.38 305.1,188.32 305.5,187.46 305.9,187.71 306.3,187.75 306.7,188.26 307.1,188.33 307.5,188.37 307.9,188.63 308.3,187.42 308.7,187.48 309.1,187.69 309.5,188.07 309.9,188.34 310.3,188.38 310.7,188.51 311.1,187.72 311.5,187.62 311.9,187.89 312.3,188.17 312.7,188.31 313.1,188.58 313.5,188.57 313.9,187.72 314.3,187.73 314.7,188.16 315.1,188.22 315.5,188.54 315.9,188.55 316.3,187.94 316.7,188.17 317.1,188.15 317.5,188.46 317.9,188.55 318.3,188.58 318.7,188.62 319.1,188.72 319.5,188.70 319.9,188.76 320.3,188.81 320.7,188.85 321.1,188.88 321.5,188.88 321.9,188.88 322.3,188.88 322.7,188.88 323.1,186.78 323.5,185.60 323.9,186.42 324.3,186.03 324.7,186.96 325.1,187.07 325.5,187.29 325.9,187.14 326.3,187.35 326.7,187.83 327.1,187.75 327.5,187.82 327.9,188.19 328.3,188.29 328.7,188.39 329.1,188.29 329.5,188.56 329.9,188.51 330.3,188.59 330.7,188.63 331.1,188.75 331.5,188.73 331.9,188.71 332.3,188.75 332.7,188.78 333.1,188.82 333.5,188.84 333.9,188.87 334.3,188.88 334.7,188.88 335.1,188.88 335.5,188.88 335.9,188.88 336.3,188.88 336.7,188.88 337.1,188.88 337.5,188.88 337.9,188.88 338.3,188.88 338.7,188.88 339.1,188.88 339.5,188.88 339.9,188.88 340.3,188.88 340.7,188.88 341.1,188.88 341.5,188.88 341.9,188.88 342.3,188.88 342.7,188.88 343.1,188.88 343.5,188.88 343.9,188.88 344.3,188.88 344.7,188.81 345.1,188.56 345.5,188.67 345.9,188.67 346.3,188.73 346.7,188.80 347.1,188.85 347.5,188.88 347.9,188.88 348.3,188.88 348.7,188.83 349.1,188.56 349.5,188.62 349.9,188.77 350.3,188.76 350.7,188.82 351.1,188.87 351.5,188.88 351.9,188.88 352.3,188.88 352.7,188.81 353.1,188.46 353.5,188.63 353.9,188.79 354.3,188.73 354.7,188.80 355.1,188.85 355.5,188.88 355.9,188.88 356.3,188.88 356.7,188.88 357.1,188.88 357.5,188.88 357.9,188.65 358.3,188.61 358.7,188.71 359.1,188.73 359.5,188.77 359.9,188.83 360.3,188.88 360.7,188.88 361.1,188.88 361.5,188.88 361.9,188.88 362.3,188.88 362.7,188.88 363.1,188.88 363.5,188.88 363.9,188.88 364.3,188.88 364.7,188.88 365.1,188.88 365.5,188.88 365.9,188.64 366.3,188.61 366.7,188.72 367.1,188.76 367.5,188.77 367.9,188.83 368.3,188.88 368.7,188.88 369.1,188.88 369.5,188.88 369.9,188.88 370.3,188.88 370.7,188.88 371.1,188.88 371.5,188.88 371.9,188.88 372.3,188.88 372.7,188.88 373.1,188.88 373.5,188.88 373.9,188.88 374.3,188.88 374.7,188.88 375.1,188.88 375.5,188.88 375.9,188.88 376.3,188.88 376.7,188.88 377.1,188.88 377.5,188.88 377.9,188.88 378.3,188.88 378.7,188.88 379.1,188.88 379.5,188.88 379.9,188.88 380.3,188.88 380.7,188.88 381.1,188.88 381.5,188.88 381.9,188.88 382.3,188.88 382.7,188.88 383.1,188.88 383.5,188.88 383.9,188.88 384.3,188.88 384.7,188.88 385.1,188.88 385.5,188.88 385.9,188.17 386.3,184.64 386.7,185.59 387.1,185.52 387.5,185.55 387.9,185.86 388.3,186.03 388.7,186.13 389.1,186.26 389.5,186.97 389.9,187.09 390.3,187.25 390.7,187.56 391.1,187.62 391.5,187.81 391.9,187.82 392.3,187.82 392.7,188.07 393.1,188.16 393.5,188.23 393.9,188.20 394.3,188.19 394.7,188.41 395.1,188.39 395.5,188.49 395.9,188.49 396.3,188.49 396.7,188.54 397.1,188.73 397.5,188.75 397.9,188.76 398.3,188.70 398.7,188.73 399.1,188.76 399.5,188.78 399.9,188.81 400.3,188.83 400.7,188.85 401.1,188.87 401.5,188.88 401.9,188.88 402.3,188.88 402.7,188.88 403.1,188.88 403.5,188.88 403.9,188.88 404.3,188.88 404.7,188.88 405.1,188.88 405.5,188.88 405.9,188.88 406.3,188.88 406.7,188.88 407.1,188.74 407.5,187.40 407.9,187.57 408.3,187.69 408.7,188.04 409.1,188.18 409.5,188.38 409.9,188.41 410.3,188.59 410.7,188.52 411.1,188.70 411.5,188.76 411.9,188.74 412.3,188.80 412.7,188.84 413.1,188.88 413.5,188.88 413.9,188.88 414.3,188.88 414.7,187.95 415.1,187.51 415.5,187.59 415.9,187.83 416.3,188.23 416.7,188.20 417.1,188.50 417.5,188.60 417.9,188.72 418.3,188.75 418.7,188.72 419.1,188.79 419.5,188.84 419.9,188.88 420.3,188.88 420.7,188.88 421.1,187.53 421.5,186.53 421.9,186.59 422.3,187.13 422.7,187.15 423.1,187.51 423.5,187.55 423.9,188.06 424.3,188.00 424.7,188.14 425.1,188.24 425.5,188.51 425.9,188.57 426.3,188.54 426.7,188.70 427.1,188.69 427.5,188.70 427.9,188.75 428.3,188.38 428.7,187.52 429.1,187.60 429.5,188.15 429.9,188.28 430.3,188.34 430.7,188.34 431.1,187.44 431.5,187.45 431.9,188.05 432.3,188.08 432.7,188.28 433.1,188.42 433.5,187.54 433.9,187.84 434.3,188.12 434.7,188.18 435.1,188.25 435.5,188.49 435.9,188.66 436.3,188.68 436.7,188.73 437.1,188.76 437.5,188.82 437.9,188.87 438.3,188.88 438.7,188.45 439.1,187.30 439.5,187.67 439.9,187.91 440.3,188.22 440.7,188.43 441.1,188.60 441.5,188.59 441.9,188.80 442.3,188.77 442.7,187.87 443.1,187.39 443.5,188.06 443.9,188.27 444.3,188.45 444.7,188.44 445.1,188.68 445.5,188.76 445.9,187.57 446.3,187.65 446.7,187.88 447.1,188.19 447.5,188.13 447.9,188.46 448.3,188.46 448.7,188.64 449.1,188.70 449.5,188.72 449.9,188.79 450.3,188.84 450.7,188.79 451.1,188.22 451.5,188.30 451.9,188.17 452.3,188.32 452.7,188.56 453.1,188.61 453.5,188.67 453.9,188.67 454.3,188.72 454.7,188.77 455.1,188.82 455.5,188.85 455.9,188.41 456.3,188.24 456.7,188.30 457.1,188.40 457.5,188.47 457.9,188.47 458.3,188.67 458.7,188.65 459.1,188.72 459.5,188.74 459.9,188.79 460.3,188.84 460.7,188.87 461.1,188.88 461.5,188.88 461.9,188.88 462.3,188.88 462.7,188.88 463.1,188.88 463.5,188.88 463.9,188.88 464.3,188.88 464.7,188.37 465.1,187.27 465.5,187.47 465.9,187.56 466.3,188.03 466.7,187.98 467.1,188.22 467.5,188.26 467.9,188.49 468.3,188.47 468.7,188.56 469.1,188.72 469.5,188.74 469.9,188.74 470.3,188.79 470.7,188.83 471.1,188.87 471.5,187.55 471.9,186.93 472.3,187.48 472.7,187.66 473.1,187.71 473.5,187.91 473.9,188.06 474.3,188.14 474.7,188.41 475.1,188.39 475.5,188.48 475.9,188.64 476.3,188.13 476.7,187.78 477.1,188.01 477.5,188.25 477.9,188.32 478.3,188.54 478.7,188.49 479.1,188.62 479.5,188.69 479.9,188.75 480.3,188.81 480.7,188.86 481.1,188.76 481.5,187.46 481.9,187.80 482.3,188.20 482.7,188.39 483.1,188.59 483.5,188.74 483.9,188.73 484.3,188.23 484.7,187.91 485.1,188.03 485.5,188.39 485.9,188.50 486.3,188.63 486.7,188.79 487.1,188.76 487.5,187.53 487.9,187.89 488.3,188.11 488.7,188.33 489.1,188.65 489.5,188.66 489.9,188.73 490.3,188.81 490.7,188.87 491.1,188.88 491.5,186.64 491.9,185.93 492.3,186.65 492.7,186.99 493.1,187.12 493.5,187.43 493.9,187.52 494.3,187.69 494.7,187.87 495.1,187.98 495.5,188.24 495.9,188.21 496.3,188.38 496.7,188.47 497.1,188.50 497.5,188.66 497.9,188.65 498.3,188.67 498.7,188.78 499.1,188.75 499.5,188.79 499.9,188.56 500.3,188.42 500.7,188.58 501.1,188.50 501.5,188.62 501.9,188.73 502.3,188.76 502.7,188.75 503.1,188.80 503.5,188.84 503.9,188.88 504.3,188.88 504.7,188.88 505.1,188.88 505.5,188.88 505.9,188.88 506.3,188.88 506.7,188.88 507.1,188.88 507.5,188.88 507.9,188.88 508.3,188.88 508.7,188.88 509.1,188.88 509.5,188.88 509.9,188.88 510.3,188.88 510.7,188.88 511.1,188.88 511.5,188.88 511.9,188.24 512.3,187.95 512.7,188.10 513.1,187.98 513.5,188.10 513.9,188.29 514.3,188.39 514.7,188.39 515.1,188.63 515.5,188.71 515.9,188.71 516.3,188.74 516.7,188.80 517.1,188.85 517.5,188.88 517.9,188.88 518.3,188.88 518.7,188.88 519.1,188.88 519.5,188.31 519.9,188.27 520.3,188.44 520.7,188.51 521.1,188.70 521.5,188.70 521.9,188.76 522.3,188.82 522.7,188.87 523.1,188.88 523.5,188.88 523.9,188.88 524.3,188.88 524.7,188.88 525.1,188.88 525.5,188.88 525.9,188.33 526.3,188.28 526.7,188.37 527.1,188.52 527.5,188.60 527.9,188.78 528.3,188.76 528.7,188.82 529.1,188.87 529.5,188.88 529.9,188.88 530.3,188.88 530.7,188.88 531.1,188.88 531.5,188.88 531.9,188.88 532.3,188.88 532.7,188.88 533.1,188.70 533.5,188.13 533.9,188.41 534.3,188.47 534.7,188.60 535.1,188.74 535.5,188.73 535.9,188.79 536.3,188.85 536.7,188.88 537.1,188.88 537.5,188.88 537.9,188.88 538.3,188.88 538.7,188.88 539.1,188.88 539.5,188.88 539.9,188.70 540.3,188.64 540.7,188.63 541.1,188.49 541.5,188.57 541.9,188.53 542.3,188.61 542.7,188.64 543.1,188.53 543.5,188.65 543.9,188.63 544.3,188.53 544.7,188.56 545.1,188.55 545.5,188.56 545.9,188.55 546.3,188.65 546.7,188.66 547.1,188.80 547.5,188.72 547.9,188.76 548.3,188.79 548.7,188.82 549.1,188.85 549.5,188.87 549.9,188.88 550.3,188.88 550.7,188.88 551.1,188.88 551.5,188.88 551.9,188.88 552.3,188.88 552.7,188.88 553.1,188.88 553.5,188.88 553.9,188.88 554.3,187.76 554.7,186.66 555.1,186.87 555.5,187.46 555.9,187.59 556.3,187.72 556.7,188.07 557.1,188.24 557.5,188.38 557.9,188.52 558.3,188.29 558.7,187.14 559.1,187.23 559.5,187.66 559.9,187.78 560.3,188.07 560.7,188.40 561.1,188.31 561.5,188.51 561.9,188.63 562.3,188.68 562.7,187.35 563.1,187.48 563.5,187.83 563.9,187.98 564.3,188.08 564.7,188.13 565.1,188.34 565.5,188.43 565.9,188.66 566.3,188.71 566.7,188.76 567.1,188.74 567.5,188.80 567.9,188.84 568.3,186.93 568.7,186.86 569.1,187.33 569.5,187.65 569.9,187.72 570.3,188.08 570.7,188.13 571.1,188.32 571.5,188.53 571.9,188.55 572.3,188.58 572.7,188.66 573.1,188.70 573.5,188.76 573.9,188.81 574.3,188.86 574.7,188.31 575.1,186.91 575.5,187.54 575.9,187.95 576.3,188.15 576.7,188.24 577.1,188.37 577.5,188.42 577.9,187.39 578.3,187.34 578.7,187.92 579.1,188.25 579.5,188.20 579.9,188.51 580.3,188.51 580.7,187.48 581.1,187.51 581.5,187.97 581.9,188.12 582.3,188.30 582.7,188.39 583.1,188.51 583.5,187.64 583.9,187.63 584.3,188.04 584.7,188.12 585.1,188.34 585.5,188.45 585.9,188.63 586.3,188.34 586.7,188.19 587.1,188.23 587.5,188.32 587.9,188.40 588.3,188.48 588.7,188.64 589.1,188.71 589.5,188.74 589.9,188.75 590.3,188.80 590.7,188.84 591.1,188.88 591.5,188.88 591.9,188.88 592.3,188.88 592.7,188.88 593.1,188.88 593.5,188.88 593.9,188.88 594.3,188.88 594.7,188.88 595.1,188.88 595.5,188.88 595.9,188.88 596.3,188.88 596.7,188.44 597.1,187.50 597.5,187.55 597.9,187.66 598.3,188.08 598.7,188.15 599.1,188.31 599.5,188.38 599.9,188.55 600.3,188.59 600.7,188.64 601.1,188.72 601.5,188.72 601.9,188.29 602.3,188.28 602.7,188.26 603.1,188.39 603.5,188.40 603.9,188.55 604.3,188.67 604.7,188.72 605.1,188.77 605.5,188.74 605.9,188.79 606.3,188.84 606.7,188.87 607.1,188.88 607.5,188.88 607.9,188.88 608.3,188.88 608.7,188.88 609.1,188.88 609.5,188.88 609.9,188.88 610.3,188.88 610.7,188.88 611.1,188.88 611.5,188.88 611.9,188.88 612.3,188.88 612.7,188.88 613.1,188.88 613.5,188.88 613.9,188.88 614.3,188.88 614.7,188.88 615.1,188.88 615.5,188.88 615.9,188.88 616.3,188.88 616.7,188.44 617.1,187.48 617.5,187.56 617.9,188.08 618.3,188.07 618.7,188.34 619.1,188.30 619.5,188.49 619.9,188.63 620.3,188.71 620.7,188.74 621.1,188.75 621.5,188.80 621.9,187.93 622.3,187.86 622.7,188.09 623.1,188.27 623.5,188.39 623.9,188.43 624.3,188.64 624.7,188.69 625.1,188.82 625.5,188.77 625.9,187.78 626.3,187.69 626.7,187.91 627.1,188.27 627.5,188.38 627.9,188.57 628.3,188.65 628.7,188.75 629.1,188.78 629.5,188.77 629.9,187.90 630.3,187.63 630.7,188.11 631.1,188.33 631.5,188.51 631.9,188.60 632.3,188.65 632.7,188.78 633.1,188.76 633.5,188.82 633.9,188.87 634.3,188.88 634.7,188.88 635.1,188.88 635.5,188.88 635.9,188.88 636.3,188.88 636.7,188.88 637.1,188.88 637.5,188.88 637.9,188.40 638.3,186.84 638.7,187.25 639.1,187.70 639.5,188.03 639.9,188.05 640.3,188.22 640.7,188.37 641.1,187.50 641.5,187.69 641.9,188.08 642.3,188.36 642.7,188.38 643.1,188.53 643.5,187.85 643.9,187.73 644.3,187.95 644.7,188.19 645.1,188.18 645.5,188.39 645.9,188.51 646.3,188.55 646.7,188.67 647.1,188.70 647.5,188.76 647.9,188.81 648.3,188.86 648.7,188.88 649.1,188.88 649.5,188.88 649.9,188.27 650.3,188.14 650.7,188.28 651.1,188.55 651.5,188.65 651.9,188.66 652.3,188.74 652.7,188.81 653.1,188.87 653.5,188.88 653.9,188.26 654.3,187.99 654.7,188.22 655.1,188.44 655.5,188.56 655.9,188.76 656.3,188.74 656.7,188.57 657.1,187.89 657.5,188.35 657.9,188.41 658.3,188.66 658.7,188.72 659.1,186.94 659.5,186.04 659.9,186.39 660.3,186.48 660.7,186.86 661.1,186.90 661.5,187.34 661.9,187.67 662.3,187.77 662.7,188.02 663.1,187.97 663.5,188.17 663.9,188.32 664.3,188.46 664.7,188.48 665.1,188.49 665.5,188.55 665.9,188.59 666.3,188.63 666.7,188.71 667.1,188.71 667.5,188.75 667.9,188.79 668.3,188.82 668.7,188.85 669.1,188.88 669.5,188.88 669.9,188.63 670.3,188.44 670.7,188.47 671.1,188.59 671.5,188.57 671.9,188.48 672.3,188.59 672.7,188.63 673.1,188.70 673.5,188.73 673.9,188.78 674.3,188.82 674.7,188.86 675.1,188.88 675.5,188.88 675.9,188.88 676.3,188.88 676.7,188.81 677.1,188.50 677.5,188.58 677.9,188.60 678.3,188.61 678.7,188.75 679.1,188.70 679.5,188.76 679.9,188.80 680.3,188.84 680.7,188.88 681.1,188.88 681.5,188.88 681.9,188.88 682.3,188.88 682.7,188.57 683.1,188.04 683.5,187.96 683.9,188.31 684.3,188.49 684.7,188.65 685.1,188.64 685.5,188.71 685.9,188.78 686.3,188.84 686.7,188.88 687.1,188.88 687.5,188.36 687.9,187.54 688.3,187.55 688.7,188.13 689.1,188.22 689.5,188.37 689.9,188.44 690.3,188.53 690.7,188.67 691.1,188.80 691.5,188.76 691.9,188.81 692.3,188.86 692.7,188.88 693.1,188.88 693.5,188.88 693.9,188.70 694.3,187.38 694.7,187.36 695.1,187.89 695.5,188.19 695.9,188.39 696.3,188.57 696.7,188.53 697.1,188.70 697.5,187.72 697.9,187.79 698.3,188.06 698.7,188.44 699.1,188.55 699.5,188.67 699.9,188.78 700.3,188.77 700.7,188.84 701.1,188.88 701.5,187.84 701.9,185.91 702.3,186.40 702.7,186.34 703.1,186.68 703.5,186.61 703.9,186.64 704.3,187.17 704.7,187.04 705.1,187.26 705.5,187.33 705.9,187.63 706.3,187.94 706.7,187.84 707.1,187.94 707.5,188.11 707.9,188.21 708.3,188.25 708.7,188.40 709.1,188.50 709.5,188.47 709.9,188.60 710.3,188.58 710.7,188.65 711.1,188.60 711.5,188.63 711.9,188.67 712.3,188.71 712.7,188.74 713.1,188.77 713.5,188.80 713.9,188.82 714.3,188.85 714.7,188.87 715.1,188.88 715.5,188.88 715.9,188.88 716.3,188.88 716.7,188.88 717.1,188.88 717.5,188.88 717.9,188.88 718.3,188.88 718.7,188.88 719.1,188.88 719.5,188.88 719.9,188.88 720.3,188.88 720.7,188.88 721.1,188.88 721.5,188.88 721.9,188.88 722.3,188.05 722.7,187.12 723.1,187.16 723.5,187.54 723.9,187.41 724.3,187.57 724.7,187.77 725.1,187.92 725.5,188.05 725.9,188.20 726.3,188.29 726.7,188.39 727.1,188.57 727.5,188.58 727.9,188.55 728.3,188.73 728.7,188.80 729.1,188.39 729.5,187.49 729.9,187.22 730.3,187.29 730.7,187.74 731.1,187.91 731.5,187.82 731.9,188.08 732.3,188.33 732.7,188.42 733.1,188.53 733.5,188.55 733.9,188.62 734.3,188.65 734.7,188.76 735.1,188.76 735.5,188.80 735.9,187.80 736.3,187.58 736.7,187.56 737.1,187.87 737.5,187.97 737.9,188.32 738.3,188.29 738.7,188.44 739.1,188.64 739.5,188.66 739.9,188.67 740.3,188.73 740.7,188.79 741.1,188.83 741.5,188.87 741.9,188.88 742.3,188.88 742.7,188.21 743.1,186.71 743.5,187.29 743.9,187.55 744.3,187.74 744.7,188.06 745.1,188.04 745.5,188.36 745.9,188.53 746.3,188.56 746.7,188.36 747.1,187.25 747.5,187.58 747.9,188.04 748.3,188.18 748.7,188.37 749.1,188.51 749.5,188.69 749.9,187.77 750.3,187.86 750.7,187.81 751.1,188.02 751.5,188.15 751.9,188.42 752.3,188.41 752.7,188.61 753.1,188.66 753.5,188.67 753.9,188.70 754.3,188.76 754.7,188.81 755.1,188.85 755.5,188.88 755.9,188.88 756.3,188.88 756.7,188.88 757.1,188.88 757.5,188.88 757.9,188.27 758.3,188.18 758.7,188.42 759.1,188.62 759.5,188.72 759.9,188.75 760.3,188.76 760.7,188.82 761.1,188.87 761.5,188.88 761.9,188.88 762.3,188.88 762.7,188.88 763.1,188.88 763.5,188.88 763.9,188.88 764.3,188.17 764.7,187.79 765.1,188.03 765.5,188.14 765.9,188.02 766.3,188.37 766.7,188.42 767.1,188.49 767.5,188.70 767.9,188.14 768.3,188.25 768.7,188.30 769.1,188.48 769.5,188.63 769.9,188.69 770.3,188.77 770.7,188.84 771.1,188.88 771.5,188.88 771.9,188.41 772.3,188.35 772.7,188.41 773.1,188.59 773.5,188.78 773.9,188.74 774.3,188.82 774.7,188.87 775.1,188.88 775.5,188.88 775.9,188.88 776.3,188.88 776.7,188.88 777.1,188.88 777.5,188.88 777.9,188.88 778.3,188.88 778.7,188.49 779.1,188.48 779.5,188.66 779.9,188.80 780.3,188.76 780.7,188.82 781.1,188.87 781.5,188.88 781.9,188.88 782.3,188.88 782.7,188.88 783.1,188.88 783.5,188.88 783.9,188.88 784.3,188.88 784.7,188.88 785.1,188.88 785.5,187.31 785.9,187.45 786.3,187.56 786.7,187.86 787.1,188.12 787.5,188.31 787.9,188.35 788.3,188.48 788.7,188.58 789.1,188.41 789.5,187.46 789.9,187.62 790.3,188.04 790.7,188.35 791.1,188.53 791.5,188.59 791.9,188.73 792.3,188.73 792.7,188.55 793.1,187.95 793.5,187.96 793.9,187.92 794.3,188.26 794.7,188.49 795.1,188.51 795.5,188.55 795.9,188.74 796.3,188.73 796.7,188.61 797.1,187.93 797.5,188.00 797.9,187.99 798.3,187.99 798.7,188.19 799.1,188.17 799.5,188.22 799.9,188.40 799.9,189.81 799.5,189.87 799.1,190.08 798.7,190.01 798.3,190.04 797.9,190.22 797.5,190.14 797.1,190.11 796.7,189.72 796.3,189.87 795.9,189.65 795.5,189.70 795.1,189.78 794.7,189.87 794.3,189.90 793.9,190.10 793.5,190.19 793.1,190.14 792.7,189.69 792.3,189.60 791.9,189.71 791.5,189.73 791.1,189.85 790.7,189.96 790.3,190.08 789.9,190.12 789.5,190.32 789.1,189.82 788.7,189.66 788.3,189.76 787.9,189.89 787.5,189.92 787.1,189.99 786.7,190.12 786.3,190.42 785.9,190.61 785.5,190.39 785.1,189.72 784.7,189.72 784.3,189.72 783.9,189.72 783.5,189.72 783.1,189.72 782.7,189.72 782.3,189.72 781.9,189.72 781.5,189.72 781.1,189.73 780.7,189.78 780.3,189.84 779.9,189.63 779.5,189.71 779.1,189.82 778.7,189.87 778.3,189.72 777.9,189.72 777.5,189.72 777.1,189.72 776.7,189.72 776.3,189.72 775.9,189.72 775.5,189.72 775.1,189.72 774.7,189.73 774.3,189.78 773.9,189.86 773.5,189.68 773.1,189.74 772.7,189.77 772.3,190.01 771.9,189.89 771.5,189.72 771.1,189.72 770.7,189.76 770.3,189.83 769.9,189.63 769.5,189.73 769.1,189.81 768.7,189.81 768.3,190.11 767.9,189.92 767.5,189.74 767.1,189.80 766.7,189.79 766.3,189.99 765.9,190.07 765.5,190.05 765.1,190.05 764.7,190.06 764.3,190.03 763.9,189.72 763.5,189.72 763.1,189.72 762.7,189.72 762.3,189.72 761.9,189.72 761.5,189.72 761.1,189.73 760.7,189.78 760.3,189.84 759.9,189.65 759.5,189.71 759.1,189.74 758.7,189.87 758.3,189.88 757.9,189.82 757.5,189.72 757.1,189.72 756.7,189.72 756.3,189.72 755.9,189.72 755.5,189.72 755.1,189.75 754.7,189.79 754.3,189.84 753.9,189.90 753.5,189.68 753.1,189.69 752.7,189.76 752.3,189.86 751.9,189.94 751.5,189.98 751.1,189.96 750.7,190.25 750.3,190.31 749.9,190.20 749.5,189.74 749.1,189.78 748.7,189.86 748.3,189.90 747.9,190.06 747.5,190.22 747.1,190.50 746.7,189.92 746.3,189.80 745.9,189.77 745.5,189.83 745.1,189.95 744.7,190.13 744.3,190.24 743.9,190.36 743.5,190.57 743.1,190.83 742.7,190.05 742.3,189.72 741.9,189.72 741.5,189.73 741.1,189.77 740.7,189.81 740.3,189.87 739.9,189.69 739.5,189.68 739.1,189.71 738.7,189.86 738.3,189.85 737.9,189.99 737.5,190.04 737.1,190.19 736.7,190.34 736.3,190.37 735.9,190.28 735.5,189.80 735.1,189.84 734.7,189.62 734.3,189.70 733.9,189.72 733.5,189.79 733.1,189.84 732.7,189.87 732.3,189.96 731.9,190.11 731.5,190.19 731.1,190.33 730.7,190.46 730.3,190.52 729.9,190.42 729.5,190.43 729.1,189.85 728.7,189.66 728.3,189.63 727.9,189.69 727.5,189.70 727.1,189.86 726.7,189.86 726.3,189.86 725.9,189.98 725.5,190.18 725.1,190.29 724.7,190.39 724.3,190.31 723.9,190.37 723.5,190.39 723.1,190.57 722.7,190.66 722.3,190.09 721.9,189.72 721.5,189.72 721.1,189.72 720.7,189.72 720.3,189.72 719.9,189.72 719.5,189.72 719.1,189.72 718.7,189.72 718.3,189.72 717.9,189.72 717.5,189.72 717.1,189.72 716.7,189.72 716.3,189.72 715.9,189.72 715.5,189.72 715.1,189.72 714.7,189.73 714.3,189.75 713.9,189.78 713.5,189.80 713.1,189.83 712.7,189.86 712.3,189.89 711.9,189.68 711.5,189.70 711.1,189.67 710.7,189.71 710.3,189.77 709.9,189.78 709.5,189.78 709.1,189.89 708.7,189.91 708.3,189.91 707.9,189.95 707.5,189.98 707.1,190.06 706.7,190.18 706.3,190.14 705.9,190.40 705.5,190.37 705.1,190.37 704.7,190.45 704.3,190.62 703.9,190.80 703.5,190.81 703.1,190.97 702.7,191.06 702.3,191.17 701.9,191.60 701.5,190.29 701.1,189.72 700.7,189.76 700.3,189.83 699.9,189.65 699.5,189.74 699.1,189.72 698.7,189.88 698.3,190.06 697.9,190.21 697.5,190.25 697.1,189.70 696.7,189.70 696.3,189.80 695.9,189.84 695.5,190.05 695.1,190.21 694.7,190.33 694.3,190.43 693.9,189.62 693.5,189.72 693.1,189.72 692.7,189.72 692.3,189.74 691.9,189.79 691.5,189.84 691.1,189.66 690.7,189.72 690.3,189.72 689.9,189.79 689.5,189.84 689.1,190.02 688.7,190.11 688.3,190.39 687.9,190.52 687.5,189.88 687.1,189.72 686.7,189.72 686.3,189.76 685.9,189.82 685.5,189.89 685.1,189.63 684.7,189.74 684.3,189.81 683.9,189.90 683.5,190.04 683.1,190.13 682.7,189.72 682.3,189.72 681.9,189.72 681.5,189.72 681.1,189.72 680.7,189.72 680.3,189.76 679.9,189.80 679.5,189.84 679.1,189.90 678.7,189.62 678.3,189.67 677.9,189.78 677.5,189.77 677.1,189.77 676.7,189.79 676.3,189.72 675.9,189.72 675.5,189.72 675.1,189.72 674.7,189.74 674.3,189.78 673.9,189.82 673.5,189.87 673.1,189.63 672.7,189.67 672.3,189.70 671.9,189.78 671.5,189.73 671.1,189.85 670.7,189.86 670.3,189.82 669.9,189.75 669.5,189.72 669.1,189.72 668.7,189.75 668.3,189.78 667.9,189.81 667.5,189.85 667.1,189.89 666.7,189.68 666.3,189.71 665.9,189.69 665.5,189.71 665.1,189.81 664.7,189.89 664.3,189.94 663.9,189.94 663.5,190.04 663.1,190.10 662.7,190.14 662.3,190.36 661.9,190.45 661.5,190.60 661.1,190.64 660.7,190.68 660.3,190.94 659.9,191.28 659.5,191.24 659.1,190.81 658.7,189.88 658.3,189.69 657.9,189.78 657.5,189.89 657.1,190.11 656.7,189.69 656.3,189.86 655.9,189.70 655.5,189.72 655.1,189.81 654.7,189.86 654.3,190.13 653.9,190.10 653.5,189.72 653.1,189.73 652.7,189.79 652.3,189.86 651.9,189.69 651.5,189.77 651.1,189.78 650.7,189.86 650.3,190.02 649.9,189.99 649.5,189.72 649.1,189.72 648.7,189.72 648.3,189.74 647.9,189.79 647.5,189.84 647.1,189.90 646.7,189.65 646.3,189.77 645.9,189.72 645.5,189.79 645.1,189.97 644.7,190.01 644.3,190.18 643.9,190.37 643.5,190.12 643.1,189.80 642.7,189.85 642.3,189.91 641.9,190.08 641.5,190.20 641.1,190.36 640.7,189.82 640.3,189.89 639.9,190.00 639.5,190.19 639.1,190.22 638.7,190.52 638.3,190.73 637.9,189.89 637.5,189.72 637.1,189.72 636.7,189.72 636.3,189.72 635.9,189.72 635.5,189.72 635.1,189.72 634.7,189.72 634.3,189.72 633.9,189.73 633.5,189.78 633.1,189.84 632.7,189.60 632.3,189.70 631.9,189.73 631.5,189.88 631.1,189.98 630.7,190.04 630.3,190.15 629.9,190.13 629.5,189.83 629.1,189.63 628.7,189.64 628.3,189.68 627.9,189.80 627.5,189.95 627.1,190.02 626.7,190.02 626.3,190.26 625.9,190.26 625.5,189.83 625.1,189.62 624.7,189.72 624.3,189.76 623.9,189.84 623.5,189.82 623.1,190.00 622.7,190.17 622.3,190.41 621.9,190.27 621.5,189.80 621.1,189.85 620.7,189.64 620.3,189.70 619.9,189.68 619.5,189.80 619.1,189.82 618.7,190.00 618.3,190.00 617.9,190.20 617.5,190.26 617.1,190.53 616.7,189.89 616.3,189.72 615.9,189.72 615.5,189.72 615.1,189.72 614.7,189.72 614.3,189.72 613.9,189.72 613.5,189.72 613.1,189.72 612.7,189.72 612.3,189.72 611.9,189.72 611.5,189.72 611.1,189.72 610.7,189.72 610.3,189.72 609.9,189.72 609.5,189.72 609.1,189.72 608.7,189.72 608.3,189.72 607.9,189.72 607.5,189.72 607.1,189.72 606.7,189.73 606.3,189.76 605.9,189.81 605.5,189.86 605.1,189.66 604.7,189.66 604.3,189.71 603.9,189.80 603.5,189.87 603.1,189.88 602.7,189.92 602.3,190.05 601.9,189.89 601.5,189.88 601.1,189.63 600.7,189.66 600.3,189.73 599.9,189.79 599.5,189.82 599.1,189.93 598.7,189.99 598.3,190.12 597.9,190.23 597.5,190.31 597.1,190.35 596.7,189.82 596.3,189.72 595.9,189.72 595.5,189.72 595.1,189.72 594.7,189.72 594.3,189.72 593.9,189.72 593.5,189.72 593.1,189.72 592.7,189.72 592.3,189.72 591.9,189.72 591.5,189.72 591.1,189.72 590.7,189.76 590.3,189.80 589.9,189.85 589.5,189.65 589.1,189.64 588.7,189.67 588.3,189.80 587.9,189.79 587.5,189.88 587.1,189.91 586.7,190.06 586.3,189.88 585.9,189.77 585.5,189.79 585.1,189.94 584.7,189.96 584.3,190.07 583.9,190.41 583.5,190.30 583.1,189.81 582.7,189.75 582.3,189.84 581.9,189.99 581.5,190.06 581.1,190.40 580.7,190.36 580.3,189.85 579.9,189.86 579.5,189.95 579.1,189.97 578.7,190.10 578.3,190.46 577.9,190.49 577.5,189.83 577.1,189.94 576.7,189.94 576.3,190.12 575.9,190.20 575.5,190.36 575.1,190.67 574.7,189.92 574.3,189.74 573.9,189.79 573.5,189.84 573.1,189.90 572.7,189.65 572.3,189.69 571.9,189.74 571.5,189.78 571.1,189.93 570.7,190.02 570.3,190.13 569.9,190.33 569.5,190.32 569.1,190.49 568.7,191.02 568.3,190.71 567.9,189.76 567.5,189.80 567.1,189.86 566.7,189.66 566.3,189.65 565.9,189.76 565.5,189.86 565.1,189.81 564.7,189.94 564.3,190.02 563.9,190.25 563.5,190.42 563.1,190.63 562.7,190.58 562.3,189.71 561.9,189.77 561.5,189.72 561.1,189.82 560.7,189.92 560.3,189.94 559.9,190.18 559.5,190.38 559.1,190.54 558.7,190.51 558.3,189.88 557.9,189.77 557.5,189.98 557.1,190.07 556.7,190.11 556.3,190.24 555.9,190.34 555.5,190.61 555.1,190.72 554.7,190.91 554.3,190.30 553.9,189.72 553.5,189.72 553.1,189.72 552.7,189.72 552.3,189.72 551.9,189.72 551.5,189.72 551.1,189.72 550.7,189.72 550.3,189.72 549.9,189.72 549.5,189.73 549.1,189.75 548.7,189.78 548.3,189.81 547.9,189.84 547.5,189.88 547.1,189.68 546.7,189.66 546.3,189.70 545.9,189.74 545.5,189.73 545.1,189.69 544.7,189.70 544.3,189.73 543.9,189.70 543.5,189.74 543.1,189.70 542.7,189.70 542.3,189.80 541.9,189.78 541.5,189.75 541.1,189.71 540.7,189.80 540.3,189.76 539.9,189.73 539.5,189.72 539.1,189.72 538.7,189.72 538.3,189.72 537.9,189.72 537.5,189.72 537.1,189.72 536.7,189.72 536.3,189.75 535.9,189.81 535.5,189.87 535.1,189.70 534.7,189.69 534.3,189.75 533.9,189.91 533.5,190.01 533.1,189.63 532.7,189.72 532.3,189.72 531.9,189.72 531.5,189.72 531.1,189.72 530.7,189.72 530.3,189.72 529.9,189.72 529.5,189.72 529.1,189.73 528.7,189.78 528.3,189.84 527.9,189.66 527.5,189.71 527.1,189.79 526.7,189.86 526.3,189.91 525.9,189.86 525.5,189.72 525.1,189.72 524.7,189.72 524.3,189.72 523.9,189.72 523.5,189.72 523.1,189.72 522.7,189.73 522.3,189.78 521.9,189.84 521.5,189.67 521.1,189.68 520.7,189.76 520.3,189.82 519.9,190.00 519.5,189.82 519.1,189.72 518.7,189.72 518.3,189.72 517.9,189.72 517.5,189.72 517.1,189.75 516.7,189.80 516.3,189.86 515.9,189.69 515.5,189.71 515.1,189.72 514.7,189.85 514.3,189.85 513.9,189.93 513.5,190.11 513.1,190.09 512.7,189.99 512.3,190.16 511.9,189.92 511.5,189.72 511.1,189.72 510.7,189.72 510.3,189.72 509.9,189.72 509.5,189.72 509.1,189.72 508.7,189.72 508.3,189.72 507.9,189.72 507.5,189.72 507.1,189.72 506.7,189.72 506.3,189.72 505.9,189.72 505.5,189.72 505.1,189.72 504.7,189.72 504.3,189.72 503.9,189.72 503.5,189.76 503.1,189.80 502.7,189.85 502.3,189.62 501.9,189.71 501.5,189.73 501.1,189.79 500.7,189.77 500.3,189.87 499.9,189.77 499.5,189.81 499.1,189.85 498.7,189.64 498.3,189.68 497.9,189.65 497.5,189.77 497.1,189.76 496.7,189.81 496.3,189.86 495.9,190.02 495.5,189.94 495.1,190.03 494.7,190.13 494.3,190.41 493.9,190.55 493.5,190.55 493.1,190.72 492.7,190.77 492.3,190.97 491.9,191.23 491.5,191.06 491.1,189.72 490.7,189.73 490.3,189.79 489.9,189.87 489.5,189.69 489.1,189.70 488.7,189.84 488.3,189.90 487.9,190.31 487.5,190.39 487.1,189.84 486.7,189.65 486.3,189.75 485.9,189.75 485.5,189.87 485.1,190.09 484.7,190.25 484.3,189.90 483.9,189.87 483.5,189.65 483.1,189.76 482.7,189.88 482.3,189.91 481.9,190.33 481.5,190.46 481.1,189.84 480.7,189.74 480.3,189.79 479.9,189.85 479.5,189.65 479.1,189.66 478.7,189.76 478.3,189.88 477.9,189.93 477.5,190.02 477.1,190.18 476.7,190.27 476.3,190.06 475.9,189.70 475.5,189.82 475.1,189.79 474.7,189.93 474.3,189.95 473.9,190.13 473.5,190.09 473.1,190.35 472.7,190.47 472.3,190.67 471.9,190.68 471.5,190.39 471.1,189.73 470.7,189.77 470.3,189.81 469.9,189.86 469.5,189.61 469.1,189.71 468.7,189.74 468.3,189.77 467.9,189.85 467.5,189.97 467.1,189.96 466.7,190.01 466.3,190.09 465.9,190.24 465.5,190.35 465.1,190.51 464.7,189.90 464.3,189.72 463.9,189.72 463.5,189.72 463.1,189.72 462.7,189.72 462.3,189.72 461.9,189.72 461.5,189.72 461.1,189.72 460.7,189.73 460.3,189.76 459.9,189.81 459.5,189.86 459.1,189.66 458.7,189.72 458.3,189.76 457.9,189.80 457.5,189.85 457.1,189.96 456.7,189.88 456.3,189.95 455.9,189.87 455.5,189.75 455.1,189.78 454.7,189.83 454.3,189.88 453.9,189.66 453.5,189.73 453.1,189.71 452.7,189.83 452.3,189.84 451.9,189.87 451.5,189.95 451.1,189.95 450.7,189.68 450.3,189.76 449.9,189.81 449.5,189.88 449.1,189.64 448.7,189.76 448.3,189.83 447.9,189.89 447.5,189.89 447.1,190.01 446.7,190.16 446.3,190.48 445.9,190.21 445.5,189.67 445.1,189.68 444.7,189.76 444.3,189.86 443.9,190.09 443.5,190.14 443.1,190.39 442.7,190.35 442.3,189.83 441.9,189.64 441.5,189.73 441.1,189.71 440.7,189.86 440.3,189.89 439.9,190.17 439.5,190.33 439.1,190.55 438.7,189.85 438.3,189.72 437.9,189.73 437.5,189.78 437.1,189.84 436.7,189.64 436.3,189.67 435.9,189.74 435.5,189.77 435.1,189.95 434.7,189.93 434.3,190.02 433.9,190.35 433.5,190.50 433.1,189.79 432.7,189.97 432.3,190.07 431.9,190.09 431.5,190.34 431.1,190.48 430.7,189.94 430.3,189.90 429.9,189.94 429.5,190.15 429.1,190.40 428.7,190.45 428.3,189.82 427.9,189.85 427.5,189.90 427.1,189.67 426.7,189.66 426.3,189.77 425.9,189.81 425.5,189.86 425.1,189.96 424.7,189.94 424.3,190.05 423.9,190.09 423.5,190.30 423.1,190.33 422.7,190.51 422.3,190.84 421.9,191.01 421.5,190.98 421.1,190.41 420.7,189.72 420.3,189.72 419.9,189.72 419.5,189.76 419.1,189.81 418.7,189.88 418.3,189.68 417.9,189.69 417.5,189.80 417.1,189.78 416.7,189.91 416.3,190.06 415.9,190.13 415.5,190.36 415.1,190.36 414.7,190.13 414.3,189.72 413.9,189.72 413.5,189.72 413.1,189.72 412.7,189.76 412.3,189.80 411.9,189.86 411.5,189.61 411.1,189.70 410.7,189.74 410.3,189.80 409.9,189.85 409.5,189.89 409.1,190.00 408.7,190.10 408.3,190.32 407.9,190.28 407.5,190.30 407.1,189.86 406.7,189.72 406.3,189.72 405.9,189.72 405.5,189.72 405.1,189.72 404.7,189.72 404.3,189.72 403.9,189.72 403.5,189.72 403.1,189.72 402.7,189.72 402.3,189.72 401.9,189.72 401.5,189.72 401.1,189.73 400.7,189.75 400.3,189.77 399.9,189.79 399.5,189.82 399.1,189.84 398.7,189.87 398.3,189.67 397.9,189.64 397.5,189.63 397.1,189.74 396.7,189.71 396.3,189.73 395.9,189.82 395.5,189.86 395.1,189.84 394.7,189.84 394.3,189.86 393.9,189.99 393.5,189.96 393.1,190.17 392.7,190.09 392.3,190.25 391.9,190.26 391.5,190.38 391.1,190.53 390.7,190.49 390.3,190.68 389.9,190.70 389.5,191.03 389.1,190.96 388.7,190.98 388.3,191.13 387.9,191.70 387.5,191.87 387.1,191.80 386.7,192.21 386.3,192.39 385.9,190.06 385.5,189.72 385.1,189.72 384.7,189.72 384.3,189.72 383.9,189.72 383.5,189.72 383.1,189.72 382.7,189.72 382.3,189.72 381.9,189.72 381.5,189.72 381.1,189.72 380.7,189.72 380.3,189.72 379.9,189.72 379.5,189.72 379.1,189.72 378.7,189.72 378.3,189.72 377.9,189.72 377.5,189.72 377.1,189.72 376.7,189.72 376.3,189.72 375.9,189.72 375.5,189.72 375.1,189.72 374.7,189.72 374.3,189.72 373.9,189.72 373.5,189.72 373.1,189.72 372.7,189.72 372.3,189.72 371.9,189.72 371.5,189.72 371.1,189.72 370.7,189.72 370.3,189.72 369.9,189.72 369.5,189.72 369.1,189.72 368.7,189.72 368.3,189.72 367.9,189.77 367.5,189.83 367.1,189.60 366.7,189.67 366.3,189.80 365.9,189.75 365.5,189.72 365.1,189.72 364.7,189.72 364.3,189.72 363.9,189.72 363.5,189.72 363.1,189.72 362.7,189.72 362.3,189.72 361.9,189.72 361.5,189.72 361.1,189.72 360.7,189.72 360.3,189.72 359.9,189.77 359.5,189.83 359.1,189.63 358.7,189.68 358.3,189.72 357.9,189.75 357.5,189.72 357.1,189.72 356.7,189.72 356.3,189.72 355.9,189.72 355.5,189.72 355.1,189.75 354.7,189.80 354.3,189.87 353.9,189.68 353.5,189.72 353.1,189.82 352.7,189.79 352.3,189.72 351.9,189.72 351.5,189.72 351.1,189.73 350.7,189.78 350.3,189.84 349.9,189.67 349.5,189.76 349.1,189.77 348.7,189.77 348.3,189.72 347.9,189.72 347.5,189.72 347.1,189.75 346.7,189.80 346.3,189.87 345.9,189.70 345.5,189.71 345.1,189.78 344.7,189.79 344.3,189.72 343.9,189.72 343.5,189.72 343.1,189.72 342.7,189.72 342.3,189.72 341.9,189.72 341.5,189.72 341.1,189.72 340.7,189.72 340.3,189.72 339.9,189.72 339.5,189.72 339.1,189.72 338.7,189.72 338.3,189.72 337.9,189.72 337.5,189.72 337.1,189.72 336.7,189.72 336.3,189.72 335.9,189.72 335.5,189.72 335.1,189.72 334.7,189.72 334.3,189.72 333.9,189.73 333.5,189.76 333.1,189.78 332.7,189.82 332.3,189.85 331.9,189.89 331.5,189.63 331.1,189.64 330.7,189.74 330.3,189.76 329.9,189.82 329.5,189.87 329.1,189.93 328.7,189.97 328.3,189.98 327.9,190.10 327.5,190.16 327.1,190.11 326.7,190.18 326.3,190.33 325.9,190.55 325.5,190.70 325.1,190.94 324.7,190.76 324.3,191.25 323.9,191.11 323.5,191.65 323.1,190.87 322.7,189.72 322.3,189.72 321.9,189.72 321.5,189.72 321.1,189.72 320.7,189.75 320.3,189.79 319.9,189.84 319.5,189.90 319.1,189.62 318.7,189.73 318.3,189.76 317.9,189.77 317.5,189.89 317.1,189.93 316.7,190.01 316.3,190.18 315.9,189.80 315.5,189.80 315.1,189.92 314.7,189.93 314.3,190.27 313.9,190.19 313.5,189.80 313.1,189.73 312.7,189.92 312.3,189.95 311.9,190.07 311.5,190.40 311.1,190.52 310.7,189.79 310.3,189.86 309.9,189.89 309.5,190.13 309.1,190.27 308.7,190.57 308.3,190.66 307.9,189.72 307.5,189.83 307.1,189.98 306.7,189.97 306.3,190.12 305.9,190.41 305.5,190.47 305.1,189.89 304.7,190.01 304.3,189.99 303.9,190.19 303.5,190.36 303.1,190.47 302.7,190.66 302.3,190.38 301.9,189.72 301.5,189.72 301.1,189.72 300.7,189.72 300.3,189.72 299.9,189.74 299.5,189.79 299.1,189.85 298.7,189.61 298.3,189.68 297.9,189.80 297.5,189.89 297.1,189.96 296.7,189.63 296.3,189.72 295.9,189.75 295.5,189.81 295.1,189.87 294.7,189.66 294.3,189.75 293.9,189.82 293.5,189.88 293.1,189.95 292.7,189.63 292.3,189.72 291.9,189.75 291.5,189.81 291.1,189.87 290.7,189.67 290.3,189.70 289.9,189.73 289.5,189.85 289.1,190.05 288.7,189.62 288.3,189.72 287.9,189.72 287.5,189.72 287.1,189.72 286.7,189.73 286.3,189.76 285.9,189.79 285.5,189.83 285.1,189.88 284.7,189.66 284.3,189.71 283.9,189.75 283.5,189.76 283.1,189.81 282.7,189.90 282.3,189.90 281.9,189.95 281.5,190.13 281.1,190.15 280.7,190.33 280.3,190.32 279.9,190.46 279.5,190.71 279.1,190.76 278.7,190.02 278.3,189.73 277.9,189.71 277.5,189.83 277.1,189.89 276.7,189.95 276.3,190.00 275.9,190.25 275.5,190.31 275.1,190.34 274.7,189.82 274.3,189.72 273.9,189.72 273.5,189.72 273.1,189.73 272.7,189.76 272.3,189.80 271.9,189.84 271.5,189.89 271.1,189.70 270.7,189.67 270.3,189.72 269.9,189.76 269.5,189.83 269.1,189.86 268.7,189.95 268.3,190.15 267.9,190.13 267.5,190.16 267.1,190.32 266.7,190.21 266.3,189.89 265.9,189.96 265.5,190.17 265.1,190.17 264.7,190.55 264.3,190.80 263.9,189.95 263.5,190.04 263.1,190.11 262.7,190.21 262.3,190.36 261.9,190.71 261.5,190.09 261.1,189.72 260.7,189.79 260.3,189.74 259.9,189.77 259.5,189.92 259.1,189.98 258.7,190.02 258.3,190.15 257.9,190.27 257.5,190.26 257.1,190.41 256.7,190.45 256.3,190.67 255.9,190.93 255.5,190.99 255.1,191.21 254.7,191.56 254.3,191.59 253.9,190.32 253.5,189.72 253.1,189.72 252.7,189.73 252.3,189.76 251.9,189.81 251.5,189.86 251.1,189.64 250.7,189.68 250.3,189.76 249.9,189.81 249.5,189.81 249.1,189.86 248.7,190.03 248.3,190.10 247.9,190.25 247.5,190.30 247.1,189.76 246.7,189.72 246.3,189.72 245.9,189.73 245.5,189.76 245.1,189.80 244.7,189.85 244.3,189.90 243.9,189.69 243.5,189.71 243.1,189.78 242.7,189.74 242.3,189.89 241.9,189.94 241.5,190.03 241.1,190.11 240.7,190.25 240.3,190.22 239.9,190.12 239.5,189.72 239.1,189.72 238.7,189.72 238.3,189.72 237.9,189.72 237.5,189.72 237.1,189.72 236.7,189.72 236.3,189.72 235.9,189.73 235.5,189.74 235.1,189.76 234.7,189.78 234.3,189.80 233.9,189.82 233.5,189.85 233.1,189.87 232.7,189.90 232.3,189.65 231.9,189.69 231.5,189.73 231.1,189.68 230.7,189.69 230.3,189.71 229.9,189.80 229.5,189.75 229.1,189.82 228.7,189.79 228.3,189.89 227.9,189.91 227.5,190.00 227.1,189.93 226.7,190.08 226.3,190.02 225.9,190.22 225.5,190.16 225.1,190.18 224.7,190.29 224.3,190.39 223.9,190.42 223.5,190.65 223.1,190.73 222.7,190.86 222.3,191.03 221.9,191.13 221.5,191.25 221.1,191.04 220.7,191.30 220.3,191.42 219.9,191.68 219.5,191.71 219.1,192.01 218.7,190.36 218.3,189.72 217.9,189.72 217.5,189.72 217.1,189.72 216.7,189.72 216.3,189.72 215.9,189.72 215.5,189.72 215.1,189.72 214.7,189.72 214.3,189.72 213.9,189.72 213.5,189.72 213.1,189.72 212.7,189.72 212.3,189.72 211.9,189.72 211.5,189.72 211.1,189.72 210.7,189.72 210.3,189.72 209.9,189.72 209.5,189.72 209.1,189.72 208.7,189.72 208.3,189.72 207.9,189.72 207.5,189.72 207.1,189.72 206.7,189.72 206.3,189.72 205.9,189.72 205.5,189.72 205.1,189.72 204.7,189.72 204.3,189.72 203.9,189.72 203.5,189.72 203.1,189.72 202.7,189.72 202.3,189.72 201.9,189.72 201.5,189.72 201.1,189.72 200.7,189.72 200.3,189.72 199.9,189.72 199.5,189.72 199.1,189.72 198.7,189.72 198.3,189.72 197.9,189.72 197.5,189.72 197.1,189.72 196.7,189.72 196.3,189.72 195.9,189.72 195.5,189.72 195.1,189.72 194.7,189.72 194.3,189.72 193.9,189.72 193.5,189.72 193.1,189.72 192.7,189.72 192.3,189.72 191.9,189.72 191.5,189.72 191.1,189.72 190.7,189.72 190.3,189.72 189.9,189.72 189.5,189.72 189.1,189.72 188.7,189.72 188.3,189.72 187.9,189.72 187.5,189.72 187.1,189.72 186.7,189.72 186.3,189.72 185.9,189.72 185.5,189.72 185.1,189.72 184.7,189.72 184.3,189.72 183.9,189.72 183.5,189.72 183.1,189.72 182.7,189.72 182.3,189.72 181.9,189.72 181.5,189.72 181.1,189.72 180.7,189.72 180.3,189.72 179.9,189.72 179.5,189.72 179.1,189.72 178.7,189.72 178.3,189.72 177.9,189.72 177.5,189.72 177.1,189.72 176.7,189.72 176.3,189.72" fill="#f2f2f2" stroke="#3a2a3a" stroke-opacity="0.35" stroke-width="0.35"/><rect x="335.0" y="32" width="0.72" height="504.4" fill="#e01018"/><path d="M330.59999999999997 32 h9.6 l-4.8 5.4 z" fill="#f01010"/></svg>
<div class="a" style="left:60.4px;top:98.4px;width:8.7px;height:109.2px;background:#1b1b1b"></div>
<div class="a" style="left:69px;top:98.6px;width:107.3px;height:35.900000000000006px;background:#1f232c"></div>
<div class="a" style="left:69px;top:134.5px;width:107.3px;height:36.5px;background:#2c3c59"></div>
<div class="a" style="left:69px;top:171.0px;width:107.3px;height:36.5px;background:#7c3a3c;border:0.9px solid #a31d1d;border-right-width:1.6px"></div>
<div class="tn" style="left:72.6px;top:104.2px">Bus Master</div>
<div class="fd" style="left:72.3px;top:115.2px;width:54.4px;height:11.2px"></div>
<div class="tb" style="left:141.5px;top:101.9px;width:10.9px;height:10.5px;line-height:9px">M</div>
<div class="tb" style="left:141.5px;top:115.2px;width:10.9px;height:11.1px;line-height:9.6px">A</div>
<div class="tb" style="left:154.4px;top:115.2px;width:10.9px;height:11.1px;line-height:9.6px;color:#757575;background:#3a3a3a;border-color:#2a2a2a">G</div>
<div class="a" style="left:167.9px;top:100.0px;width:2.5px;height:33.4px;background:#414141;border:0.5px solid #0e0e0e"></div>
<div class="a" style="left:171.2px;top:100.0px;width:2.5px;height:33.4px;background:#414141;border:0.5px solid #0e0e0e"></div>
<div class="tn" style="left:72.6px;top:140.1px">Guitare-micro</div>
<div class="fd" style="left:72.3px;top:151.1px;width:54.4px;height:11.2px"></div>
<div class="tb" style="left:129px;top:137.6px;width:10.8px;height:10.7px"><div class="a" style="left:2.2px;top:2.1px;width:5px;height:5px;border-radius:50%;background:#8e6468"></div></div>
<div class="tb" style="left:141.5px;top:137.6px;width:10.9px;height:10.7px;line-height:9.2px;border:1px solid #c9b414;">M</div>
<div class="tb" style="left:154.4px;top:137.6px;width:10.9px;height:10.7px;line-height:9.2px;">S</div>
<div class="tb" style="left:129px;top:151.2px;width:10.9px;height:11.2px;line-height:9.7px">P</div>
<div class="tb" style="left:141.5px;top:151.2px;width:10.9px;height:11.2px;line-height:9.7px">A</div>
<div class="tb" style="left:154.4px;top:151.2px;width:10.9px;height:11.2px;line-height:9.7px">G</div>
<div class="a" style="left:169.4px;top:136.3px;width:4.4px;height:33.4px;background:#494949;border:0.7px solid #131313"></div>
<div class="a" style="left:170.1px;top:167.7px;width:3px;height:1.3px;background:#1fb82a"></div>
<div class="tn" style="left:72.6px;top:176.6px">Guitare-piezzo</div>
<div class="fd" style="left:72.3px;top:187.6px;width:54.4px;height:11.2px"></div>
<div class="tb" style="left:129px;top:174.1px;width:10.8px;height:10.7px"><div class="a" style="left:2.2px;top:2.1px;width:5px;height:5px;border-radius:50%;background:#8e6468"></div></div>
<div class="tb" style="left:141.5px;top:174.1px;width:10.9px;height:10.7px;line-height:9.2px;">M</div>
<div class="tb" style="left:154.4px;top:174.1px;width:10.9px;height:10.7px;line-height:9.2px;background:linear-gradient(#2bb838,#1c9a28);color:#0a3a0e;border-color:#0d4212;">S</div>
<div class="tb" style="left:129px;top:187.7px;width:10.9px;height:11.2px;line-height:9.7px">P</div>
<div class="tb" style="left:141.5px;top:187.7px;width:10.9px;height:11.2px;line-height:9.7px">A</div>
<div class="tb" style="left:154.4px;top:187.7px;width:10.9px;height:11.2px;line-height:9.7px">G</div>
<div class="a" style="left:169.4px;top:172.8px;width:4.4px;height:33.4px;background:#494949;border:0.7px solid #131313"></div>
<div class="a" style="left:60.4px;top:536.3px;width:739.6px;height:0.9px;background:#505050"></div>
<div class="a" style="left:60.5px;top:537px;width:739.5px;height:54px;background:#343434"></div>
<div class="a" style="left:60.4px;top:537.2px;width:13.6px;height:54px;background:linear-gradient(90deg,#3b3b3b 0,#3b3b3b 88%,#323232 90%)"></div>
<div class="a" style="left:74px;top:555.2px;width:726px;height:0.8px;background:#222"></div>
<div class="a" style="left:74px;top:573px;width:726px;height:0.8px;background:#222"></div>
<div class="a" style="left:74px;top:537.6px;width:250px;height:53.4px;background:#515151;border-left:0.9px solid #b9b98a;border-top:0.8px solid #787878;border-right:0.9px solid #8c8c8c"></div>
<div class="a" style="left:75px;top:555.2px;width:248.5px;height:2.2px;background:#3f3f3f"></div>
<div class="a" style="left:75px;top:571.6px;width:248.5px;height:3px;background:#3f3f3f"></div>
<div class="a" style="left:75px;top:557.3px;width:232.8px;height:14.3px;background:#e886c0"></div>
<div class="a" style="left:75px;top:574.6px;width:232.8px;height:14.4px;background:#a987e8"></div>
<div class="a" style="left:117.9px;top:538px;width:1px;height:53px;background:#e0182a"></div>
<svg width="800" height="591" viewBox="0 0 800 591" style="pointer-events:none"><path d="M68 562 l-1.8 2.2 l1.8 2.2" stroke="#ccc" stroke-width="0.7" fill="none"/></svg>
<div class="a" style="left:0.6px;top:15.3px;width:59.6px;height:575.7px;background:#2c3c59;border-left:0.7px solid #1a2233;border-top:0.6px solid #1a2233"></div>
<div class="btn" style="left:2.3px;top:17px;width:9.4px;height:9.6px;font-size:6.0px;line-height:8.1px;"></div>
<div class="a" style="left:13.7px;top:16.9px;width:33.6px;height:9.4px;border-radius:2px;background:linear-gradient(#9a6adc,#7c58b8);box-shadow:0 0 0 0.4px #2a2244"></div>
<div class="btn" style="left:48.8px;top:17px;width:9.6px;height:9.6px;font-size:6.0px;line-height:8.1px;"></div>
<div class="btn" style="left:2px;top:29px;width:56.5px;height:9.6px;font-size:5.6px;line-height:8.1px;">Guitare-piezzo</div>
<div class="btn" style="left:2px;top:41px;width:45.2px;height:9.8px;font-size:5.8px;line-height:8.3px;">2</div>
<div class="a" style="left:49.7px;top:41.6px;width:8.5px;height:8.5px;border-radius:50%;background:radial-gradient(circle at 42% 38%,#6c6c6c 0,#484848 55%,#1c1c1c 72%,#1c1c1c 100%)"></div>
<div class="btn" style="left:2px;top:53px;width:56.5px;height:10.4px;font-size:6.2px;line-height:8.9px;">Ø</div>
<div class="a" style="left:2px;top:65px;width:56.6px;height:254.8px;background:#121212;border:0.5px solid #0c0c0c"></div>
<div class="a" style="left:2.9px;top:67.5px;width:55px;height:9.8px;border-radius:2px;background:linear-gradient(#4c6c9e,#3c5884)"></div>
<svg width="70" height="400" viewBox="0 0 70 400"><circle cx="8.5" cy="72.6" r="2.7" fill="#0c1a08"/><circle cx="8.5" cy="72.6" r="1.75" fill="#46d03c"/></svg>
<div class="a" style="left:13.2px;top:70.4px;font-size:5.4px;color:#ececec">Fader</div>
<div class="a" style="left:29.6px;top:65.6px;width:1.8px;height:1px;background:#5ab81e"></div>
<div class="a" style="left:29.6px;top:77.9px;width:1.8px;height:1px;background:#5ab81e"></div>
<div class="a" style="left:2px;top:321.4px;width:56.6px;height:19.4px;background:#121212"></div>
<div class="a" style="left:4.4px;top:331.4px;width:51.8px;height:8.2px;border-radius:2px;background:#161616;border:0.5px solid #2a3448"></div>
<div class="a" style="left:4.4px;top:331.4px;width:8.2px;height:8.2px;border-radius:2px 0 0 2px;background:#7b9bd6;color:#22304c;font-size:6px;line-height:8.4px;text-align:center">G</div>
<div class="a" style="left:48px;top:331.4px;width:8.2px;height:8.2px;border-radius:0 2px 2px 0;background:#7b9bd6;color:#22304c;font-size:6px;line-height:8.4px;text-align:center">D</div>
<div class="a" style="left:30.8px;top:328px;width:0.8px;height:12.4px;background:#2c3c59"></div>
<svg width="800" height="591" viewBox="0 0 800 591"><path d="M29 322 h4.8 v5 l-2.4 2.4 l-2.4 -2.4 z" fill="#9a9aa6" stroke="#555" stroke-width="0.3"/></svg>
<div class="btn" style="left:2px;top:342.6px;width:27px;height:23.6px;font-size:6.0px;line-height:22.1px;"></div>
<div class="a" style="left:8.4px;top:347.2px;width:14.4px;height:14.4px;border-radius:50%;background:#8a6468;box-shadow:0 0 0 0.4px #3a2a2c"></div>
<div class="btn" style="left:31.3px;top:342.8px;width:27px;height:10.5px;font-size:6.3px;line-height:9.0px;border:0.9px solid #c47a12;">Entrée</div>
<div class="btn" style="left:31.3px;top:355.4px;width:27px;height:10.8px;font-size:6.3px;line-height:9.3px;">Disque</div>
<div class="btn" style="left:2px;top:368.6px;width:27px;height:11px;font-size:6.7px;line-height:9.5px;text-align:left;padding-left:3.2px;">Iso.</div>
<div class="btn" style="left:31.5px;top:368.6px;width:26.8px;height:11px;font-size:6.8px;line-height:9.5px;text-align:left;padding-left:2.6px;">Verr.</div>
<svg width="70" height="400" viewBox="0 0 70 400"><circle cx="22.5" cy="374.4" r="2.7" fill="#1a0a0a"/><circle cx="22.5" cy="374.4" r="1.7" fill="#8a0808"/><circle cx="51.6" cy="374.4" r="2.7" fill="#1a0a0a"/><circle cx="51.6" cy="374.4" r="1.7" fill="#8a0808"/></svg>
<div class="btn" style="left:2px;top:381.9px;width:27px;height:13.2px;font-size:6.3px;line-height:11.7px;">Muet</div>
<div class="btn" style="left:31.4px;top:381.9px;width:27.2px;height:13.2px;font-size:6.3px;line-height:11.7px;background:linear-gradient(#2bb838,#1c9a28);color:#0c4a12;border-color:#0d5212;">Solo</div>
<div class="a" style="left:2.2px;top:397.6px;width:26.8px;height:12.8px;border-radius:2px;background:#181818;color:#d4d4d4;font-size:5.6px;line-height:12.4px;text-align:center">-0,0</div>
<div class="a" style="left:31.5px;top:397.6px;width:26.6px;height:12.8px;border-radius:2px;background:#181818;color:#d4d4d4;font-size:5.6px;line-height:12.4px;text-align:center">-11,6</div>
<div class="a" style="left:9.4px;top:413.4px;width:12.2px;height:139px;border-radius:1.5px;background:linear-gradient(#1b1b1b 0,#222 21.2%,#686868 21.2%,#686868 22%,#484848 22%,#3c3c3c 100%);border:0.6px solid #141414"></div>
<div class="a" style="left:32.4px;top:413.4px;width:6.2px;height:139px;background:#434343;border:0.6px solid #151515"></div>
<svg width="800" height="591" viewBox="0 0 800 591"><text x="51.5" y="424.5" text-anchor="end" font-size="5.5" fill="#c01818" font-family="Liberation Sans, sans-serif">+3</text><rect x="30.5" y="422.15" width="1.8" height="0.9" fill="#c01818"/><rect x="39.2" y="422.15" width="2.8" height="0.9" fill="#c01818"/><text x="51.5" y="433.6" text-anchor="end" font-size="5.5" fill="#c01818" font-family="Liberation Sans, sans-serif">+0</text><rect x="30.5" y="431.25" width="1.8" height="0.9" fill="#c01818"/><rect x="39.2" y="431.25" width="2.8" height="0.9" fill="#c01818"/><text x="51.5" y="442.6" text-anchor="end" font-size="5.5" fill="#ccc" font-family="Liberation Sans, sans-serif">-3</text><rect x="30.5" y="440.25" width="1.8" height="0.9" fill="#ccc"/><rect x="39.2" y="440.25" width="2.8" height="0.9" fill="#ccc"/><text x="51.5" y="448.9" text-anchor="end" font-size="5.5" fill="#ccc" font-family="Liberation Sans, sans-serif">-5</text><rect x="30.5" y="446.55" width="1.8" height="0.9" fill="#ccc"/><rect x="39.2" y="446.55" width="2.8" height="0.9" fill="#ccc"/><text x="51.5" y="463.7" text-anchor="end" font-size="5.5" fill="#ccc" font-family="Liberation Sans, sans-serif">-10</text><rect x="30.5" y="461.35" width="1.8" height="0.9" fill="#ccc"/><rect x="39.2" y="461.35" width="2.8" height="0.9" fill="#ccc"/><text x="51.5" y="478.8" text-anchor="end" font-size="5.5" fill="#ccc" font-family="Liberation Sans, sans-serif">-15</text><rect x="30.5" y="476.45" width="1.8" height="0.9" fill="#ccc"/><rect x="39.2" y="476.45" width="2.8" height="0.9" fill="#ccc"/><text x="51.5" y="488.2" text-anchor="end" font-size="5.5" fill="#ccc" font-family="Liberation Sans, sans-serif">-18</text><rect x="30.5" y="485.85" width="1.8" height="0.9" fill="#ccc"/><rect x="39.2" y="485.85" width="2.8" height="0.9" fill="#ccc"/><text x="51.5" y="494.2" text-anchor="end" font-size="5.5" fill="#ccc" font-family="Liberation Sans, sans-serif">-20</text><rect x="30.5" y="491.85" width="1.8" height="0.9" fill="#ccc"/><rect x="39.2" y="491.85" width="2.8" height="0.9" fill="#ccc"/><text x="51.5" y="506.5" text-anchor="end" font-size="5.5" fill="#ccc" font-family="Liberation Sans, sans-serif">-25</text><rect x="30.5" y="504.15" width="1.8" height="0.9" fill="#ccc"/><rect x="39.2" y="504.15" width="2.8" height="0.9" fill="#ccc"/><text x="51.5" y="518.5" text-anchor="end" font-size="5.5" fill="#ccc" font-family="Liberation Sans, sans-serif">-30</text><rect x="30.5" y="516.15" width="1.8" height="0.9" fill="#ccc"/><rect x="39.2" y="516.15" width="2.8" height="0.9" fill="#ccc"/><text x="51.5" y="536.7" text-anchor="end" font-size="5.5" fill="#ccc" font-family="Liberation Sans, sans-serif">-40</text><rect x="30.5" y="534.35" width="1.8" height="0.9" fill="#ccc"/><rect x="39.2" y="534.35" width="2.8" height="0.9" fill="#ccc"/><text x="51.5" y="545.9" text-anchor="end" font-size="5.5" fill="#ccc" font-family="Liberation Sans, sans-serif">-50</text><rect x="30.5" y="543.55" width="1.8" height="0.9" fill="#ccc"/><rect x="39.2" y="543.55" width="2.8" height="0.9" fill="#ccc"/><text x="42.2" y="552" font-size="3.7" letter-spacing="0.45" fill="#8894aa" font-family="Liberation Sans, sans-serif">dBFS</text><rect x="30.9" y="416.15" width="1.3" height="0.7" fill="#c81a1a" fill-opacity="0.9"/><rect x="39.2" y="416.15" width="1.7" height="0.7" fill="#c81a1a" fill-opacity="0.9"/><rect x="30.9" y="419.17" width="1.3" height="0.7" fill="#c81a1a" fill-opacity="0.9"/><rect x="39.2" y="419.17" width="1.7" height="0.7" fill="#c81a1a" fill-opacity="0.9"/><rect x="30.9" y="425.21" width="1.3" height="0.7" fill="#c81a1a" fill-opacity="0.9"/><rect x="39.2" y="425.21" width="1.7" height="0.7" fill="#c81a1a" fill-opacity="0.9"/><rect x="30.9" y="428.23" width="1.3" height="0.7" fill="#c81a1a" fill-opacity="0.9"/><rect x="39.2" y="428.23" width="1.7" height="0.7" fill="#c81a1a" fill-opacity="0.9"/><rect x="30.9" y="434.27" width="1.3" height="0.7" fill="#d0d0d0" fill-opacity="0.9"/><rect x="39.2" y="434.27" width="1.7" height="0.7" fill="#d0d0d0" fill-opacity="0.9"/><rect x="30.9" y="437.29" width="1.3" height="0.7" fill="#d0d0d0" fill-opacity="0.9"/><rect x="39.2" y="437.29" width="1.7" height="0.7" fill="#d0d0d0" fill-opacity="0.9"/><rect x="30.9" y="443.33" width="1.3" height="0.7" fill="#d0d0d0" fill-opacity="0.9"/><rect x="39.2" y="443.33" width="1.7" height="0.7" fill="#d0d0d0" fill-opacity="0.9"/><rect x="30.9" y="449.37" width="1.3" height="0.7" fill="#d0d0d0" fill-opacity="0.9"/><rect x="39.2" y="449.37" width="1.7" height="0.7" fill="#d0d0d0" fill-opacity="0.9"/><rect x="30.9" y="452.39" width="1.3" height="0.7" fill="#d0d0d0" fill-opacity="0.9"/><rect x="39.2" y="452.39" width="1.7" height="0.7" fill="#d0d0d0" fill-opacity="0.9"/><rect x="30.9" y="455.41" width="1.3" height="0.7" fill="#d0d0d0" fill-opacity="0.9"/><rect x="39.2" y="455.41" width="1.7" height="0.7" fill="#d0d0d0" fill-opacity="0.9"/><rect x="30.9" y="458.43" width="1.3" height="0.7" fill="#c81a1a" fill-opacity="0.9"/><rect x="39.2" y="458.43" width="1.7" height="0.7" fill="#c81a1a" fill-opacity="0.9"/><rect x="30.9" y="464.47" width="1.3" height="0.7" fill="#d0d0d0" fill-opacity="0.9"/><rect x="39.2" y="464.47" width="1.7" height="0.7" fill="#d0d0d0" fill-opacity="0.9"/><rect x="30.9" y="467.49" width="1.3" height="0.7" fill="#d0d0d0" fill-opacity="0.9"/><rect x="39.2" y="467.49" width="1.7" height="0.7" fill="#d0d0d0" fill-opacity="0.9"/><rect x="30.9" y="470.51" width="1.3" height="0.7" fill="#d0d0d0" fill-opacity="0.9"/><rect x="39.2" y="470.51" width="1.7" height="0.7" fill="#d0d0d0" fill-opacity="0.9"/><rect x="30.9" y="473.53" width="1.3" height="0.7" fill="#d0d0d0" fill-opacity="0.9"/><rect x="39.2" y="473.53" width="1.7" height="0.7" fill="#d0d0d0" fill-opacity="0.9"/><rect x="30.9" y="479.63" width="1.3" height="0.7" fill="#d0d0d0" fill-opacity="0.9"/><rect x="39.2" y="479.63" width="1.7" height="0.7" fill="#d0d0d0" fill-opacity="0.9"/><rect x="30.9" y="482.71" width="1.3" height="0.7" fill="#d0d0d0" fill-opacity="0.9"/><rect x="39.2" y="482.71" width="1.7" height="0.7" fill="#d0d0d0" fill-opacity="0.9"/><rect x="30.9" y="488.87" width="1.3" height="0.7" fill="#d0d0d0" fill-opacity="0.9"/><rect x="39.2" y="488.87" width="1.7" height="0.7" fill="#d0d0d0" fill-opacity="0.9"/><rect x="30.9" y="498.05" width="1.3" height="0.7" fill="#d0d0d0" fill-opacity="0.9"/><rect x="39.2" y="498.05" width="1.7" height="0.7" fill="#d0d0d0" fill-opacity="0.9"/><rect x="30.9" y="510.25" width="1.3" height="0.7" fill="#d0d0d0" fill-opacity="0.9"/><rect x="39.2" y="510.25" width="1.7" height="0.7" fill="#d0d0d0" fill-opacity="0.9"/><rect x="30.9" y="525.35" width="1.3" height="0.7" fill="#d0d0d0" fill-opacity="0.9"/><rect x="39.2" y="525.35" width="1.7" height="0.7" fill="#d0d0d0" fill-opacity="0.9"/><rect x="30.9" y="539.05" width="1.3" height="0.7" fill="#d0d0d0" fill-opacity="0.9"/><rect x="39.2" y="539.05" width="1.7" height="0.7" fill="#d0d0d0" fill-opacity="0.9"/><rect x="30.9" y="547.85" width="1.3" height="0.7" fill="#d0d0d0" fill-opacity="0.9"/><rect x="39.2" y="547.85" width="1.7" height="0.7" fill="#d0d0d0" fill-opacity="0.9"/></svg>
<div class="btn" style="left:2px;top:555px;width:17.5px;height:9.4px;font-size:5.9px;line-height:7.9px;line-height:8.2px;">M</div>
<div class="btn" style="left:21.4px;top:555px;width:17.2px;height:9.4px;font-size:5.9px;line-height:7.9px;line-height:8.2px;">Grp</div>
<div class="btn" style="left:40.5px;top:555px;width:18.1px;height:9.4px;font-size:5.9px;line-height:7.9px;line-height:8.2px;">Post</div>
<div class="btn" style="left:2px;top:567px;width:56.6px;height:9.4px;font-size:5.7px;line-height:7.9px;line-height:8.2px;">Bus Master</div>
<div class="btn" style="left:2px;top:579px;width:56.6px;height:11.3px;font-size:6.6px;line-height:9.8px;line-height:9.8px;">Commentaires</div>
<svg width="800" height="591" viewBox="0 0 800 591"><path d="M4 19.4 v4.8 M10 19.4 v4.8 M4 21.8 h6" stroke="#ddd" stroke-width="0.8" fill="none"/><path d="M4.6 21.8 l1.4 -1.2 v2.4 z M9.4 21.8 l-1.4 -1.2 v2.4 z" fill="#ddd"/><path d="M51.4 19.6 l4.4 4.4 M55.8 19.6 l-4.4 4.4" stroke="#e4e4e4" stroke-width="0.8"/></svg>
</body></html>
